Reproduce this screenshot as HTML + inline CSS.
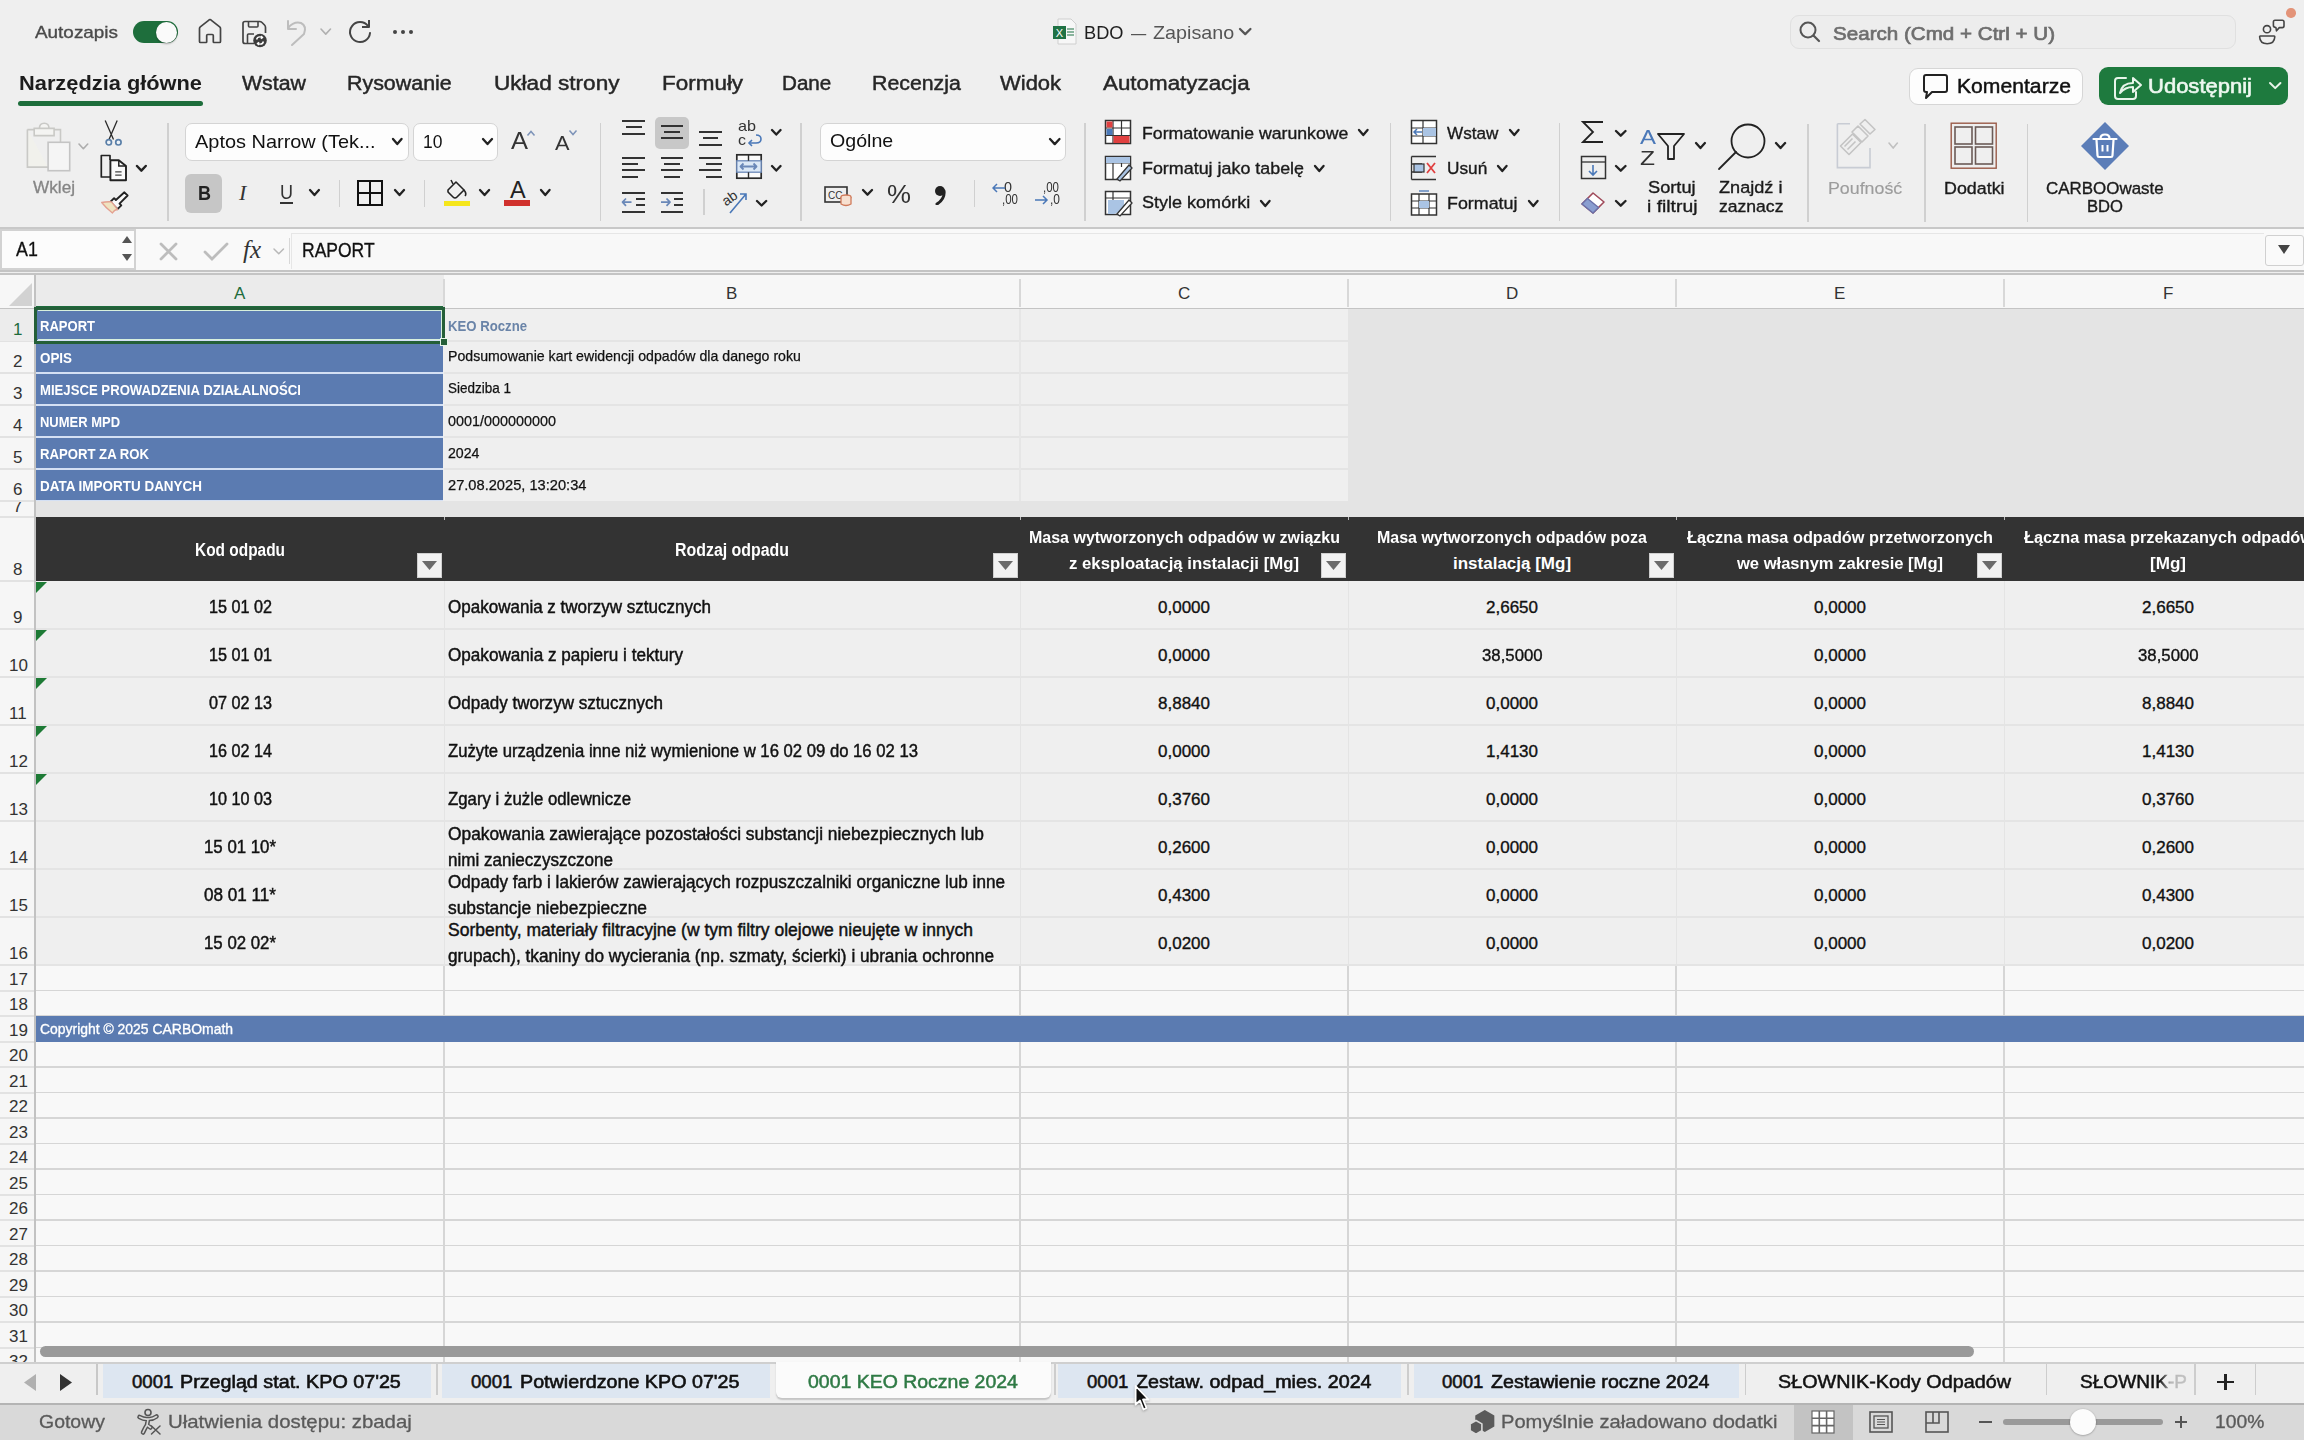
<!DOCTYPE html><html><head><meta charset='utf-8'><style>
*{margin:0;padding:0;box-sizing:border-box}
html,body{width:2304px;height:1440px;overflow:hidden;background:#efefef;font-family:"Liberation Sans",sans-serif;color:#222;position:relative}
.a{position:absolute}
.t{position:absolute;white-space:pre;transform-origin:0 0}
</style></head><body>
<div class="a" style="left:0px;top:274px;width:2304px;height:1088px;background:#f8f8f8;"></div>
<div class="a" style="left:0px;top:309px;width:36px;height:1053px;background:#f6f6f6;"></div>
<div class="a" style="left:36px;top:309px;width:2268px;height:656px;background:#efefef;"></div>
<div class="a" style="left:1348px;top:309px;width:956px;height:208px;background:#e4e4e4;"></div>
<div class="a" style="left:36px;top:501px;width:2268px;height:16px;background:#e4e4e4;"></div>
<div class="a" style="left:36px;top:989.75px;width:2268px;height:1.5px;background:#d6d6d6;"></div>
<div class="a" style="left:36px;top:1015.25px;width:2268px;height:1.5px;background:#d6d6d6;"></div>
<div class="a" style="left:36px;top:1040.75px;width:2268px;height:1.5px;background:#d6d6d6;"></div>
<div class="a" style="left:36px;top:1066.25px;width:2268px;height:1.5px;background:#d6d6d6;"></div>
<div class="a" style="left:36px;top:1091.75px;width:2268px;height:1.5px;background:#d6d6d6;"></div>
<div class="a" style="left:36px;top:1117.25px;width:2268px;height:1.5px;background:#d6d6d6;"></div>
<div class="a" style="left:36px;top:1142.75px;width:2268px;height:1.5px;background:#d6d6d6;"></div>
<div class="a" style="left:36px;top:1168.25px;width:2268px;height:1.5px;background:#d6d6d6;"></div>
<div class="a" style="left:36px;top:1193.75px;width:2268px;height:1.5px;background:#d6d6d6;"></div>
<div class="a" style="left:36px;top:1219.25px;width:2268px;height:1.5px;background:#d6d6d6;"></div>
<div class="a" style="left:36px;top:1244.75px;width:2268px;height:1.5px;background:#d6d6d6;"></div>
<div class="a" style="left:36px;top:1270.25px;width:2268px;height:1.5px;background:#d6d6d6;"></div>
<div class="a" style="left:36px;top:1295.75px;width:2268px;height:1.5px;background:#d6d6d6;"></div>
<div class="a" style="left:36px;top:1321.25px;width:2268px;height:1.5px;background:#d6d6d6;"></div>
<div class="a" style="left:36px;top:1346.75px;width:2268px;height:1.5px;background:#d6d6d6;"></div>
<div class="a" style="left:36px;top:1372.25px;width:2268px;height:1.5px;background:#d6d6d6;"></div>
<div class="a" style="left:36px;top:1397.75px;width:2268px;height:1.5px;background:#d6d6d6;"></div>
<div class="a" style="left:443.25px;top:965px;width:1.5px;height:397px;background:#d6d6d6;"></div>
<div class="a" style="left:1019.25px;top:965px;width:1.5px;height:397px;background:#d6d6d6;"></div>
<div class="a" style="left:1347.25px;top:965px;width:1.5px;height:397px;background:#d6d6d6;"></div>
<div class="a" style="left:1675.25px;top:965px;width:1.5px;height:397px;background:#d6d6d6;"></div>
<div class="a" style="left:2003.25px;top:965px;width:1.5px;height:397px;background:#d6d6d6;"></div>
<div class="a" style="left:36px;top:628.25px;width:2268px;height:1.5px;background:#e4e4e4;"></div>
<div class="a" style="left:36px;top:676.25px;width:2268px;height:1.5px;background:#e4e4e4;"></div>
<div class="a" style="left:36px;top:724.25px;width:2268px;height:1.5px;background:#e4e4e4;"></div>
<div class="a" style="left:36px;top:772.25px;width:2268px;height:1.5px;background:#e4e4e4;"></div>
<div class="a" style="left:36px;top:820.25px;width:2268px;height:1.5px;background:#e4e4e4;"></div>
<div class="a" style="left:36px;top:868.25px;width:2268px;height:1.5px;background:#e4e4e4;"></div>
<div class="a" style="left:36px;top:916.25px;width:2268px;height:1.5px;background:#e4e4e4;"></div>
<div class="a" style="left:36px;top:964.25px;width:2268px;height:1.5px;background:#e4e4e4;"></div>
<div class="a" style="left:443.5px;top:581px;width:1.5px;height:384px;background:#e4e4e4;"></div>
<div class="a" style="left:1019.5px;top:581px;width:1.5px;height:384px;background:#e4e4e4;"></div>
<div class="a" style="left:1347.5px;top:581px;width:1.5px;height:384px;background:#e4e4e4;"></div>
<div class="a" style="left:1675.5px;top:581px;width:1.5px;height:384px;background:#e4e4e4;"></div>
<div class="a" style="left:2003.5px;top:581px;width:1.5px;height:384px;background:#e4e4e4;"></div>
<div class="a" style="left:444px;top:340.25px;width:904px;height:1.5px;background:#e4e4e4;"></div>
<div class="a" style="left:444px;top:372.25px;width:904px;height:1.5px;background:#e4e4e4;"></div>
<div class="a" style="left:444px;top:404.25px;width:904px;height:1.5px;background:#e4e4e4;"></div>
<div class="a" style="left:444px;top:436.25px;width:904px;height:1.5px;background:#e4e4e4;"></div>
<div class="a" style="left:444px;top:468.25px;width:904px;height:1.5px;background:#e4e4e4;"></div>
<div class="a" style="left:1019px;top:309px;width:2px;height:192px;background:#e6e6e6;"></div>
<div class="a" style="left:0px;top:340.0px;width:34px;height:2px;background:#e2e2e2;"></div>
<div class="a" style="left:0px;top:372.0px;width:34px;height:2px;background:#e2e2e2;"></div>
<div class="a" style="left:0px;top:404.0px;width:34px;height:2px;background:#e2e2e2;"></div>
<div class="a" style="left:0px;top:436.0px;width:34px;height:2px;background:#e2e2e2;"></div>
<div class="a" style="left:0px;top:468.0px;width:34px;height:2px;background:#e2e2e2;"></div>
<div class="a" style="left:0px;top:500.0px;width:34px;height:2px;background:#e2e2e2;"></div>
<div class="a" style="left:0px;top:516.0px;width:34px;height:2px;background:#e2e2e2;"></div>
<div class="a" style="left:0px;top:580.0px;width:34px;height:2px;background:#e2e2e2;"></div>
<div class="a" style="left:0px;top:628.0px;width:34px;height:2px;background:#e2e2e2;"></div>
<div class="a" style="left:0px;top:676.0px;width:34px;height:2px;background:#e2e2e2;"></div>
<div class="a" style="left:0px;top:724.0px;width:34px;height:2px;background:#e2e2e2;"></div>
<div class="a" style="left:0px;top:772.0px;width:34px;height:2px;background:#e2e2e2;"></div>
<div class="a" style="left:0px;top:820.0px;width:34px;height:2px;background:#e2e2e2;"></div>
<div class="a" style="left:0px;top:868.0px;width:34px;height:2px;background:#e2e2e2;"></div>
<div class="a" style="left:0px;top:916.0px;width:34px;height:2px;background:#e2e2e2;"></div>
<div class="a" style="left:0px;top:964.0px;width:34px;height:2px;background:#e2e2e2;"></div>
<div class="a" style="left:0px;top:989.5px;width:34px;height:2px;background:#e2e2e2;"></div>
<div class="a" style="left:0px;top:1015.0px;width:34px;height:2px;background:#e2e2e2;"></div>
<div class="a" style="left:0px;top:1040.5px;width:34px;height:2px;background:#e2e2e2;"></div>
<div class="a" style="left:0px;top:1066.0px;width:34px;height:2px;background:#e2e2e2;"></div>
<div class="a" style="left:0px;top:1091.5px;width:34px;height:2px;background:#e2e2e2;"></div>
<div class="a" style="left:0px;top:1117.0px;width:34px;height:2px;background:#e2e2e2;"></div>
<div class="a" style="left:0px;top:1142.5px;width:34px;height:2px;background:#e2e2e2;"></div>
<div class="a" style="left:0px;top:1168.0px;width:34px;height:2px;background:#e2e2e2;"></div>
<div class="a" style="left:0px;top:1193.5px;width:34px;height:2px;background:#e2e2e2;"></div>
<div class="a" style="left:0px;top:1219.0px;width:34px;height:2px;background:#e2e2e2;"></div>
<div class="a" style="left:0px;top:1244.5px;width:34px;height:2px;background:#e2e2e2;"></div>
<div class="a" style="left:0px;top:1270.0px;width:34px;height:2px;background:#e2e2e2;"></div>
<div class="a" style="left:0px;top:1295.5px;width:34px;height:2px;background:#e2e2e2;"></div>
<div class="a" style="left:0px;top:1321.0px;width:34px;height:2px;background:#e2e2e2;"></div>
<div class="a" style="left:0px;top:1346.5px;width:34px;height:2px;background:#e2e2e2;"></div>
<div class="a" style="left:0px;top:1372.0px;width:34px;height:2px;background:#e2e2e2;"></div>
<div class="a" style="left:0px;top:1397.5px;width:34px;height:2px;background:#e2e2e2;"></div>
<div class="a" style="left:36px;top:309px;width:406.5px;height:192px;background:#d4e0f4;"></div>
<div class="a" style="left:36px;top:309.6px;width:406.5px;height:30.8px;background:#5b7bb1;"></div>
<div class="a" style="left:36px;top:341.6px;width:406.5px;height:30.8px;background:#5b7bb1;"></div>
<div class="a" style="left:36px;top:373.6px;width:406.5px;height:30.8px;background:#5b7bb1;"></div>
<div class="a" style="left:36px;top:405.6px;width:406.5px;height:30.8px;background:#5b7bb1;"></div>
<div class="a" style="left:36px;top:437.6px;width:406.5px;height:30.8px;background:#5b7bb1;"></div>
<div class="a" style="left:36px;top:469.6px;width:406.5px;height:30.8px;background:#5b7bb1;"></div>
<div class="a" style="left:36px;top:1016.0px;width:2268px;height:25.5px;background:#5b7bb1;"></div>
<div class="t" style="left:40.00px;top:1021.00px;font-size:15px;line-height:16.75px;color:#ffffff;transform:scaleX(0.9287);-webkit-text-stroke:0.35px #ffffff;">Copyright © 2025 CARBOmath</div>
<div class="a" style="left:36px;top:517px;width:2268px;height:64px;background:#333333;"></div>
<div class="a" style="left:443.5px;top:517px;width:1px;height:3px;background:#bdbdbd;"></div>
<div class="a" style="left:1019.5px;top:517px;width:1px;height:3px;background:#bdbdbd;"></div>
<div class="a" style="left:1347.5px;top:517px;width:1px;height:3px;background:#bdbdbd;"></div>
<div class="a" style="left:1675.5px;top:517px;width:1px;height:3px;background:#bdbdbd;"></div>
<div class="a" style="left:2003.5px;top:517px;width:1px;height:3px;background:#bdbdbd;"></div>
<div class="a" style="left:0px;top:274px;width:2304px;height:35px;background:#f7f7f7;"></div>
<div class="a" style="left:36px;top:274px;width:408px;height:35px;background:#ebebeb;"></div>
<div class="a" style="left:0px;top:307.5px;width:2304px;height:1.5px;background:#c4c4c4;"></div>
<div class="a" style="left:36px;top:306px;width:408px;height:3px;background:#1e6b3c;"></div>
<div class="a" style="left:443px;top:279px;width:2px;height:28px;background:#d8d8d8;"></div>
<div class="a" style="left:1019px;top:279px;width:2px;height:28px;background:#d8d8d8;"></div>
<div class="a" style="left:1347px;top:279px;width:2px;height:28px;background:#d8d8d8;"></div>
<div class="a" style="left:1675px;top:279px;width:2px;height:28px;background:#d8d8d8;"></div>
<div class="a" style="left:2003px;top:279px;width:2px;height:28px;background:#d8d8d8;"></div>
<div class="a" style="left:34px;top:274px;width:2px;height:1088px;background:#c2c2c2;"></div>
<svg class="a" style="left:8px;top:283px;" width="25" height="24" viewBox="0 0 25 24"><path d="M24 0 L24 23 L1 23 Z" fill="#d2d2d2"/></svg>
<div class="t" style="left:234.00px;top:284.00px;font-size:17px;line-height:18.99px;color:#1e6b3c;">A</div>
<div class="t" style="left:726.00px;top:284.00px;font-size:17px;line-height:18.99px;color:#333;">B</div>
<div class="t" style="left:1178.00px;top:284.00px;font-size:17px;line-height:18.99px;color:#333;">C</div>
<div class="t" style="left:1506.00px;top:284.00px;font-size:17px;line-height:18.99px;color:#333;">D</div>
<div class="t" style="left:1834.00px;top:284.00px;font-size:17px;line-height:18.99px;color:#333;">E</div>
<div class="t" style="left:2163.00px;top:284.00px;font-size:17px;line-height:18.99px;color:#333;">F</div>
<div class="a" style="left:0px;top:309px;width:34px;height:32px;background:#ececec;"></div>
<div class="a" style="left:0px;top:341px;width:34px;height:1px;background:#e2e2e2;"></div>
<div class="t" style="left:13.00px;top:320.00px;font-size:17px;line-height:18.99px;color:#1e6b3c;">1</div>
<div class="t" style="left:13.00px;top:352.00px;font-size:17px;line-height:18.99px;color:#333;">2</div>
<div class="t" style="left:13.00px;top:384.00px;font-size:17px;line-height:18.99px;color:#333;">3</div>
<div class="t" style="left:13.00px;top:416.00px;font-size:17px;line-height:18.99px;color:#333;">4</div>
<div class="t" style="left:13.00px;top:448.00px;font-size:17px;line-height:18.99px;color:#333;">5</div>
<div class="t" style="left:13.00px;top:480.00px;font-size:17px;line-height:18.99px;color:#333;">6</div>
<div class="a" style="left:0;top:502px;width:34px;height:14px;overflow:hidden">
<div class="t" style="left:13.00px;top:-5.00px;font-size:17px;line-height:18.99px;color:#333;">7</div>
</div>
<div class="t" style="left:13.00px;top:560.00px;font-size:17px;line-height:18.99px;color:#333;">8</div>
<div class="t" style="left:13.00px;top:608.00px;font-size:17px;line-height:18.99px;color:#333;">9</div>
<div class="t" style="left:9.00px;top:656.00px;font-size:17px;line-height:18.99px;color:#333;">10</div>
<div class="t" style="left:9.00px;top:704.00px;font-size:17px;line-height:18.99px;color:#333;">11</div>
<div class="t" style="left:9.00px;top:752.00px;font-size:17px;line-height:18.99px;color:#333;">12</div>
<div class="t" style="left:9.00px;top:800.00px;font-size:17px;line-height:18.99px;color:#333;">13</div>
<div class="t" style="left:9.00px;top:848.00px;font-size:17px;line-height:18.99px;color:#333;">14</div>
<div class="t" style="left:9.00px;top:896.00px;font-size:17px;line-height:18.99px;color:#333;">15</div>
<div class="t" style="left:9.00px;top:944.00px;font-size:17px;line-height:18.99px;color:#333;">16</div>
<div class="t" style="left:9.00px;top:970.00px;font-size:17px;line-height:18.99px;color:#333;">17</div>
<div class="t" style="left:9.00px;top:995.00px;font-size:17px;line-height:18.99px;color:#333;">18</div>
<div class="t" style="left:9.00px;top:1021.00px;font-size:17px;line-height:18.99px;color:#333;">19</div>
<div class="t" style="left:9.00px;top:1046.00px;font-size:17px;line-height:18.99px;color:#333;">20</div>
<div class="t" style="left:9.00px;top:1072.00px;font-size:17px;line-height:18.99px;color:#333;">21</div>
<div class="t" style="left:9.00px;top:1097.00px;font-size:17px;line-height:18.99px;color:#333;">22</div>
<div class="t" style="left:9.00px;top:1123.00px;font-size:17px;line-height:18.99px;color:#333;">23</div>
<div class="t" style="left:9.00px;top:1148.00px;font-size:17px;line-height:18.99px;color:#333;">24</div>
<div class="t" style="left:9.00px;top:1174.00px;font-size:17px;line-height:18.99px;color:#333;">25</div>
<div class="t" style="left:9.00px;top:1199.00px;font-size:17px;line-height:18.99px;color:#333;">26</div>
<div class="t" style="left:9.00px;top:1225.00px;font-size:17px;line-height:18.99px;color:#333;">27</div>
<div class="t" style="left:9.00px;top:1250.00px;font-size:17px;line-height:18.99px;color:#333;">28</div>
<div class="t" style="left:9.00px;top:1276.00px;font-size:17px;line-height:18.99px;color:#333;">29</div>
<div class="t" style="left:9.00px;top:1301.00px;font-size:17px;line-height:18.99px;color:#333;">30</div>
<div class="t" style="left:9.00px;top:1327.00px;font-size:17px;line-height:18.99px;color:#333;">31</div>
<div class="t" style="left:9.00px;top:1352.00px;font-size:17px;line-height:18.99px;color:#333;">32</div>
<div class="t" style="left:40.00px;top:318.00px;font-size:14.5px;line-height:16.20px;color:#ffffff;font-weight:bold;transform:scaleX(0.8984);">RAPORT</div>
<div class="t" style="left:40.00px;top:350.00px;font-size:14.5px;line-height:16.20px;color:#ffffff;font-weight:bold;transform:scaleX(0.9235);">OPIS</div>
<div class="t" style="left:40.00px;top:382.00px;font-size:14.5px;line-height:16.20px;color:#ffffff;font-weight:bold;transform:scaleX(0.9067);">MIEJSCE PROWADZENIA DZIAŁALNOŚCI</div>
<div class="t" style="left:40.00px;top:414.00px;font-size:14.5px;line-height:16.20px;color:#ffffff;font-weight:bold;transform:scaleX(0.8947);">NUMER MPD</div>
<div class="t" style="left:40.00px;top:446.00px;font-size:14.5px;line-height:16.20px;color:#ffffff;font-weight:bold;transform:scaleX(0.9061);">RAPORT ZA ROK</div>
<div class="t" style="left:40.00px;top:478.00px;font-size:14.5px;line-height:16.20px;color:#ffffff;font-weight:bold;transform:scaleX(0.9282);">DATA IMPORTU DANYCH</div>
<div class="t" style="left:448.00px;top:318.00px;font-size:14.5px;line-height:16.20px;color:#6a84a8;font-weight:bold;transform:scaleX(0.9079);">KEO Roczne</div>
<div class="t" style="left:448.00px;top:348.00px;font-size:14.8px;line-height:16.53px;color:#111;transform:scaleX(0.9555);-webkit-text-stroke:0.25px #111;">Podsumowanie kart ewidencji odpadów dla danego roku</div>
<div class="t" style="left:448.00px;top:380.00px;font-size:14.8px;line-height:16.53px;color:#111;transform:scaleX(0.9115);-webkit-text-stroke:0.25px #111;">Siedziba 1</div>
<div class="t" style="left:448.00px;top:413.00px;font-size:14.8px;line-height:16.53px;color:#111;transform:scaleX(0.9719);-webkit-text-stroke:0.25px #111;">0001/000000000</div>
<div class="t" style="left:448.00px;top:445.00px;font-size:14.8px;line-height:16.53px;color:#111;transform:scaleX(0.9567);-webkit-text-stroke:0.25px #111;">2024</div>
<div class="t" style="left:448.00px;top:477.00px;font-size:14.8px;line-height:16.53px;color:#111;transform:scaleX(0.9899);-webkit-text-stroke:0.25px #111;">27.08.2025, 13:20:34</div>
<div class="t" style="left:195.00px;top:540.00px;font-size:18px;line-height:20.11px;color:#fff;font-weight:bold;transform:scaleX(0.8573);">Kod odpadu</div>
<div class="t" style="left:675.00px;top:540.00px;font-size:18px;line-height:20.11px;color:#fff;font-weight:bold;transform:scaleX(0.8838);">Rodzaj odpadu</div>
<div class="t" style="left:1028.50px;top:528.00px;font-size:17px;line-height:18.99px;color:#fff;font-weight:bold;transform:scaleX(0.9407);">Masa wytworzonych odpadów w związku</div>
<div class="t" style="left:1069.00px;top:554.00px;font-size:17px;line-height:18.99px;color:#fff;font-weight:bold;transform:scaleX(0.9856);">z eksploatacją instalacji [Mg]</div>
<div class="t" style="left:1377.00px;top:528.00px;font-size:17px;line-height:18.99px;color:#fff;font-weight:bold;transform:scaleX(0.9403);">Masa wytworzonych odpadów poza</div>
<div class="t" style="left:1453.00px;top:554.00px;font-size:17px;line-height:18.99px;color:#fff;font-weight:bold;">instalacją [Mg]</div>
<div class="t" style="left:1687.00px;top:528.00px;font-size:17px;line-height:18.99px;color:#fff;font-weight:bold;transform:scaleX(0.9584);">Łączna masa odpadów przetworzonych</div>
<div class="t" style="left:1737.00px;top:554.00px;font-size:17px;line-height:18.99px;color:#fff;font-weight:bold;transform:scaleX(0.9734);">we własnym zakresie [Mg]</div>
<div class="t" style="left:2023.50px;top:528.00px;font-size:17px;line-height:18.99px;color:#fff;font-weight:bold;transform:scaleX(0.9589);">Łączna masa przekazanych odpadów</div>
<div class="t" style="left:2150.00px;top:554.00px;font-size:17px;line-height:18.99px;color:#fff;font-weight:bold;transform:scaleX(1.0036);">[Mg]</div>
<div class="a" style="left:417px;top:553px;width:25px;height:25px;background:#f2f2f2;border:1px solid #cfcfcf"></div>
<svg class="a" style="left:422px;top:561px;" width="15" height="9" viewBox="0 0 15 9"><path d="M0 0 L15 0 L7.5 9 Z" fill="#6b6b6b"/></svg>
<div class="a" style="left:993px;top:553px;width:25px;height:25px;background:#f2f2f2;border:1px solid #cfcfcf"></div>
<svg class="a" style="left:998px;top:561px;" width="15" height="9" viewBox="0 0 15 9"><path d="M0 0 L15 0 L7.5 9 Z" fill="#6b6b6b"/></svg>
<div class="a" style="left:1321px;top:553px;width:25px;height:25px;background:#f2f2f2;border:1px solid #cfcfcf"></div>
<svg class="a" style="left:1326px;top:561px;" width="15" height="9" viewBox="0 0 15 9"><path d="M0 0 L15 0 L7.5 9 Z" fill="#6b6b6b"/></svg>
<div class="a" style="left:1649px;top:553px;width:25px;height:25px;background:#f2f2f2;border:1px solid #cfcfcf"></div>
<svg class="a" style="left:1654px;top:561px;" width="15" height="9" viewBox="0 0 15 9"><path d="M0 0 L15 0 L7.5 9 Z" fill="#6b6b6b"/></svg>
<div class="a" style="left:1977px;top:553px;width:25px;height:25px;background:#f2f2f2;border:1px solid #cfcfcf"></div>
<svg class="a" style="left:1982px;top:561px;" width="15" height="9" viewBox="0 0 15 9"><path d="M0 0 L15 0 L7.5 9 Z" fill="#6b6b6b"/></svg>
<div class="t" style="left:208.50px;top:598.00px;font-size:17.5px;line-height:19.55px;color:#111;transform:scaleX(0.9248);-webkit-text-stroke:0.45px #111;">15 01 02</div>
<div class="t" style="left:448.00px;top:598.00px;font-size:17.5px;line-height:19.55px;color:#111;transform:scaleX(0.9727);-webkit-text-stroke:0.45px #111;">Opakowania z tworzyw sztucznych</div>
<div class="t" style="left:1158.00px;top:598.00px;font-size:17px;line-height:18.99px;color:#111;-webkit-text-stroke:0.35px #111;">0,0000</div>
<div class="t" style="left:1486.00px;top:598.00px;font-size:17px;line-height:18.99px;color:#111;-webkit-text-stroke:0.35px #111;">2,6650</div>
<div class="t" style="left:1814.00px;top:598.00px;font-size:17px;line-height:18.99px;color:#111;-webkit-text-stroke:0.35px #111;">0,0000</div>
<div class="t" style="left:2142.00px;top:598.00px;font-size:17px;line-height:18.99px;color:#111;-webkit-text-stroke:0.35px #111;">2,6650</div>
<svg class="a" style="left:36px;top:582px;" width="11" height="11" viewBox="0 0 11 11"><path d="M0 0 L11 0 L0 11 Z" fill="#1d7a35"/></svg>
<div class="t" style="left:208.50px;top:646.00px;font-size:17.5px;line-height:19.55px;color:#111;transform:scaleX(0.9248);-webkit-text-stroke:0.45px #111;">15 01 01</div>
<div class="t" style="left:448.00px;top:646.00px;font-size:17.5px;line-height:19.55px;color:#111;transform:scaleX(0.9781);-webkit-text-stroke:0.45px #111;">Opakowania z papieru i tektury</div>
<div class="t" style="left:1158.00px;top:646.00px;font-size:17px;line-height:18.99px;color:#111;-webkit-text-stroke:0.35px #111;">0,0000</div>
<div class="t" style="left:1481.50px;top:646.00px;font-size:17px;line-height:18.99px;color:#111;transform:scaleX(0.9872);-webkit-text-stroke:0.35px #111;">38,5000</div>
<div class="t" style="left:1814.00px;top:646.00px;font-size:17px;line-height:18.99px;color:#111;-webkit-text-stroke:0.35px #111;">0,0000</div>
<div class="t" style="left:2137.50px;top:646.00px;font-size:17px;line-height:18.99px;color:#111;transform:scaleX(0.9872);-webkit-text-stroke:0.35px #111;">38,5000</div>
<svg class="a" style="left:36px;top:630px;" width="11" height="11" viewBox="0 0 11 11"><path d="M0 0 L11 0 L0 11 Z" fill="#1d7a35"/></svg>
<div class="t" style="left:208.50px;top:694.00px;font-size:17.5px;line-height:19.55px;color:#111;transform:scaleX(0.9248);-webkit-text-stroke:0.45px #111;">07 02 13</div>
<div class="t" style="left:448.00px;top:694.00px;font-size:17.5px;line-height:19.55px;color:#111;transform:scaleX(0.9738);-webkit-text-stroke:0.45px #111;">Odpady tworzyw sztucznych</div>
<div class="t" style="left:1158.00px;top:694.00px;font-size:17px;line-height:18.99px;color:#111;-webkit-text-stroke:0.35px #111;">8,8840</div>
<div class="t" style="left:1486.00px;top:694.00px;font-size:17px;line-height:18.99px;color:#111;-webkit-text-stroke:0.35px #111;">0,0000</div>
<div class="t" style="left:1814.00px;top:694.00px;font-size:17px;line-height:18.99px;color:#111;-webkit-text-stroke:0.35px #111;">0,0000</div>
<div class="t" style="left:2142.00px;top:694.00px;font-size:17px;line-height:18.99px;color:#111;-webkit-text-stroke:0.35px #111;">8,8840</div>
<svg class="a" style="left:36px;top:678px;" width="11" height="11" viewBox="0 0 11 11"><path d="M0 0 L11 0 L0 11 Z" fill="#1d7a35"/></svg>
<div class="t" style="left:208.50px;top:742.00px;font-size:17.5px;line-height:19.55px;color:#111;transform:scaleX(0.9248);-webkit-text-stroke:0.45px #111;">16 02 14</div>
<div class="t" style="left:448.00px;top:742.00px;font-size:17.5px;line-height:19.55px;color:#111;transform:scaleX(0.9529);-webkit-text-stroke:0.45px #111;">Zużyte urządzenia inne niż wymienione w 16 02 09 do 16 02 13</div>
<div class="t" style="left:1158.00px;top:742.00px;font-size:17px;line-height:18.99px;color:#111;-webkit-text-stroke:0.35px #111;">0,0000</div>
<div class="t" style="left:1486.00px;top:742.00px;font-size:17px;line-height:18.99px;color:#111;-webkit-text-stroke:0.35px #111;">1,4130</div>
<div class="t" style="left:1814.00px;top:742.00px;font-size:17px;line-height:18.99px;color:#111;-webkit-text-stroke:0.35px #111;">0,0000</div>
<div class="t" style="left:2142.00px;top:742.00px;font-size:17px;line-height:18.99px;color:#111;-webkit-text-stroke:0.35px #111;">1,4130</div>
<svg class="a" style="left:36px;top:726px;" width="11" height="11" viewBox="0 0 11 11"><path d="M0 0 L11 0 L0 11 Z" fill="#1d7a35"/></svg>
<div class="t" style="left:208.50px;top:790.00px;font-size:17.5px;line-height:19.55px;color:#111;transform:scaleX(0.9248);-webkit-text-stroke:0.45px #111;">10 10 03</div>
<div class="t" style="left:448.00px;top:790.00px;font-size:17.5px;line-height:19.55px;color:#111;transform:scaleX(0.9599);-webkit-text-stroke:0.45px #111;">Zgary i żużle odlewnicze</div>
<div class="t" style="left:1158.00px;top:790.00px;font-size:17px;line-height:18.99px;color:#111;-webkit-text-stroke:0.35px #111;">0,3760</div>
<div class="t" style="left:1486.00px;top:790.00px;font-size:17px;line-height:18.99px;color:#111;-webkit-text-stroke:0.35px #111;">0,0000</div>
<div class="t" style="left:1814.00px;top:790.00px;font-size:17px;line-height:18.99px;color:#111;-webkit-text-stroke:0.35px #111;">0,0000</div>
<div class="t" style="left:2142.00px;top:790.00px;font-size:17px;line-height:18.99px;color:#111;-webkit-text-stroke:0.35px #111;">0,3760</div>
<svg class="a" style="left:36px;top:774px;" width="11" height="11" viewBox="0 0 11 11"><path d="M0 0 L11 0 L0 11 Z" fill="#1d7a35"/></svg>
<div class="t" style="left:204.00px;top:838.00px;font-size:17.5px;line-height:19.55px;color:#111;transform:scaleX(0.9609);-webkit-text-stroke:0.45px #111;">15 01 10*</div>
<div class="t" style="left:448.00px;top:825.00px;font-size:17.5px;line-height:19.55px;color:#111;transform:scaleX(0.9910);-webkit-text-stroke:0.45px #111;">Opakowania zawierające pozostałości substancji niebezpiecznych lub</div>
<div class="t" style="left:448.00px;top:851.00px;font-size:17.5px;line-height:19.55px;color:#111;transform:scaleX(0.9750);-webkit-text-stroke:0.45px #111;">nimi zanieczyszczone</div>
<div class="t" style="left:1158.00px;top:838.00px;font-size:17px;line-height:18.99px;color:#111;-webkit-text-stroke:0.35px #111;">0,2600</div>
<div class="t" style="left:1486.00px;top:838.00px;font-size:17px;line-height:18.99px;color:#111;-webkit-text-stroke:0.35px #111;">0,0000</div>
<div class="t" style="left:1814.00px;top:838.00px;font-size:17px;line-height:18.99px;color:#111;-webkit-text-stroke:0.35px #111;">0,0000</div>
<div class="t" style="left:2142.00px;top:838.00px;font-size:17px;line-height:18.99px;color:#111;-webkit-text-stroke:0.35px #111;">0,2600</div>
<div class="t" style="left:204.00px;top:886.00px;font-size:17.5px;line-height:19.55px;color:#111;transform:scaleX(0.9778);-webkit-text-stroke:0.45px #111;">08 01 11*</div>
<div class="t" style="left:448.00px;top:873.00px;font-size:17.5px;line-height:19.55px;color:#111;transform:scaleX(0.9788);-webkit-text-stroke:0.45px #111;">Odpady farb i lakierów zawierających rozpuszczalniki organiczne lub inne</div>
<div class="t" style="left:448.00px;top:899.00px;font-size:17.5px;line-height:19.55px;color:#111;transform:scaleX(0.9929);-webkit-text-stroke:0.45px #111;">substancje niebezpieczne</div>
<div class="t" style="left:1158.00px;top:886.00px;font-size:17px;line-height:18.99px;color:#111;-webkit-text-stroke:0.35px #111;">0,4300</div>
<div class="t" style="left:1486.00px;top:886.00px;font-size:17px;line-height:18.99px;color:#111;-webkit-text-stroke:0.35px #111;">0,0000</div>
<div class="t" style="left:1814.00px;top:886.00px;font-size:17px;line-height:18.99px;color:#111;-webkit-text-stroke:0.35px #111;">0,0000</div>
<div class="t" style="left:2142.00px;top:886.00px;font-size:17px;line-height:18.99px;color:#111;-webkit-text-stroke:0.35px #111;">0,4300</div>
<div class="t" style="left:204.00px;top:934.00px;font-size:17.5px;line-height:19.55px;color:#111;transform:scaleX(0.9609);-webkit-text-stroke:0.45px #111;">15 02 02*</div>
<div class="t" style="left:448.00px;top:921.00px;font-size:17.5px;line-height:19.55px;color:#111;-webkit-text-stroke:0.45px #111;">Sorbenty, materiały filtracyjne (w tym filtry olejowe nieujęte w innych</div>
<div class="t" style="left:448.00px;top:947.00px;font-size:17.5px;line-height:19.55px;color:#111;transform:scaleX(0.9836);-webkit-text-stroke:0.45px #111;">grupach), tkaniny do wycierania (np. szmaty, ścierki) i ubrania ochronne</div>
<div class="t" style="left:1158.00px;top:934.00px;font-size:17px;line-height:18.99px;color:#111;-webkit-text-stroke:0.35px #111;">0,0200</div>
<div class="t" style="left:1486.00px;top:934.00px;font-size:17px;line-height:18.99px;color:#111;-webkit-text-stroke:0.35px #111;">0,0000</div>
<div class="t" style="left:1814.00px;top:934.00px;font-size:17px;line-height:18.99px;color:#111;-webkit-text-stroke:0.35px #111;">0,0000</div>
<div class="t" style="left:2142.00px;top:934.00px;font-size:17px;line-height:18.99px;color:#111;-webkit-text-stroke:0.35px #111;">0,0200</div>
<div class="a" style="left:34px;top:307px;width:411px;height:3px;background:#245f38;"></div>
<div class="a" style="left:34px;top:307px;width:3px;height:36.5px;background:#245f38;"></div>
<div class="a" style="left:442px;top:307px;width:3px;height:31px;background:#245f38;"></div>
<div class="a" style="left:34px;top:340.5px;width:406px;height:3px;background:#245f38;"></div>
<div class="a" style="left:38px;top:310px;width:404px;height:1px;background:#d8f0dd;"></div>
<div class="a" style="left:38px;top:339px;width:404px;height:1px;background:#d8f0dd;"></div>
<div class="a" style="left:441px;top:310px;width:1px;height:30px;background:#d8f0dd;"></div>
<div class="a" style="left:439.5px;top:337.5px;width:8.5px;height:8.5px;background:#245f38;border:1px solid #e8f5ea"></div>
<div class="a" style="left:40px;top:1346px;width:1934px;height:11px;background:#9a9a9a;border-radius:6px"></div>
<div class="a" style="left:0px;top:0px;width:2304px;height:228px;background:#efefef;"></div>
<div class="t" style="left:34.50px;top:23.00px;font-size:17px;line-height:18.99px;color:#4a4a4a;transform:scaleX(1.1117);-webkit-text-stroke:0.35px #4a4a4a;">Autozapis</div>
<div class="a" style="left:133px;top:21px;width:45px;height:22px;background:#1e6e3c;border-radius:11px"></div>
<div class="a" style="left:156px;top:22px;width:21px;height:21px;border-radius:50%;background:#fafafa;box-shadow:0 1px 2px rgba(0,0,0,.35)"></div>
<svg class="a" style="left:196px;top:17px;" width="28" height="28" viewBox="0 0 28 28"><path d="M3.5 24.5 L3.5 11.5 Q3.5 10.5 4.3 9.8 L13.2 2.8 Q14 2.2 14.8 2.8 L23.7 9.8 Q24.5 10.5 24.5 11.5 L24.5 24.5 Q24.5 25.5 23.5 25.5 L18 25.5 Q17.3 25.5 17.3 24.8 L17.3 18.5 Q17.3 17.5 16.3 17.5 L11.7 17.5 Q10.7 17.5 10.7 18.5 L10.7 24.8 Q10.7 25.5 10 25.5 L4.5 25.5 Q3.5 25.5 3.5 24.5 Z" fill="none" stroke="#444" stroke-width="1.7" stroke-linejoin="round"/></svg>
<svg class="a" style="left:240px;top:19px;" width="32" height="30" viewBox="0 0 32 30"><path d="M14 24.5 L5 24.5 Q3 24.5 3 22.5 L3 4.5 Q3 2.5 5 2.5 L19.5 2.5 Q21 2.5 22 3.5 L24.5 6 Q25.5 7 25.5 8.5 L25.5 14" fill="none" stroke="#444" stroke-width="1.7" stroke-linejoin="round"/><path d="M8.5 2.5 L8.5 7 Q8.5 8 9.5 8 L17 8 Q18 8 18 7 L18 2.5" fill="none" stroke="#444" stroke-width="1.6"/><path d="M7.5 24.5 L7.5 16 Q7.5 15 8.5 15 L14 15" fill="none" stroke="#444" stroke-width="1.6"/><circle cx="20" cy="21.5" r="6.8" fill="#3c3c3c"/><path d="M16.6 20.5 Q17.2 17.6 20.3 17.9 L22.3 18.6 M23.4 22.5 Q22.8 25.4 19.7 25.1 L17.7 24.4" fill="none" stroke="#fff" stroke-width="1.4"/><path d="M21.2 17 L22.6 18.7 L20.8 19.7 M18.8 26 L17.4 24.3 L19.2 23.3" fill="none" stroke="#fff" stroke-width="1.2"/></svg>
<svg class="a" style="left:284px;top:17px;" width="26" height="30" viewBox="0 0 26 30"><path d="M4 4 L4 12 L12 12 M4 11 Q10 4 17 6 Q23 9 20 17 L8 28" fill="none" stroke="#bdbdbd" stroke-width="2" stroke-linecap="round" stroke-linejoin="round"/></svg>
<svg class="a" style="left:319.25px;top:27px;" width="13.5" height="9.1" viewBox="0 0 13.5 9.1"><path d="M2 2 L6.75 7.10 L11.50 2" fill="none" stroke="#b0b0b0" stroke-width="1.6" stroke-linecap="round" stroke-linejoin="round"/></svg>
<svg class="a" style="left:346px;top:18px;" width="28" height="28" viewBox="0 0 28 28"><path d="M22 8 A10 10 0 1 0 24 15" fill="none" stroke="#444" stroke-width="2" stroke-linecap="round"/><path d="M23 2 L23 9 L16 9" fill="none" stroke="#444" stroke-width="2" stroke-linejoin="round"/></svg>
<div class="a" style="left:392.7px;top:29.7px;width:4.6px;height:4.6px;border-radius:50%;background:#444"></div>
<div class="a" style="left:400.7px;top:29.7px;width:4.6px;height:4.6px;border-radius:50%;background:#444"></div>
<div class="a" style="left:408.7px;top:29.7px;width:4.6px;height:4.6px;border-radius:50%;background:#444"></div>
<svg class="a" style="left:1052px;top:18px;" width="26" height="28" viewBox="0 0 26 28"><path d="M6 1 L19 1 L24 6 L24 26 L6 26 Z" fill="#f7f7f7" stroke="#cfcfcf" stroke-width="1"/><rect x="1" y="8" width="13" height="13" fill="#1f7244"/><text x="7.5" y="18.5" font-size="11" font-family="Liberation Sans" fill="#fff" text-anchor="middle">X</text><path d="M15 11 H22 M15 14 H22 M15 17 H22" stroke="#1f7244" stroke-width="1.2"/></svg>
<div class="t" style="left:1084.00px;top:22.00px;font-size:19px;line-height:21.22px;color:#1e1e1e;transform:scaleX(0.9594);">BDO</div>
<div class="t" style="left:1130.50px;top:22.00px;font-size:19px;line-height:21.22px;color:#555555;transform:scaleX(0.8000);">—</div>
<div class="t" style="left:1152.50px;top:22.00px;font-size:19px;line-height:21.22px;color:#555555;transform:scaleX(1.0388);">Zapisano</div>
<svg class="a" style="left:1238.275px;top:27px;" width="14.45" height="9.1" viewBox="0 0 14.45 9.1"><path d="M2 2 L7.22 7.10 L12.45 2" fill="none" stroke="#555" stroke-width="2.3" stroke-linecap="round" stroke-linejoin="round"/></svg>
<div class="a" style="left:1789.5px;top:15px;width:446.5px;height:34px;background:#ededed;border:1.5px solid #e0e0e0;border-radius:9px"></div>
<svg class="a" style="left:1798px;top:20px;" width="26" height="26" viewBox="0 0 26 26"><circle cx="10" cy="10" r="7.5" fill="none" stroke="#555" stroke-width="2"/><path d="M15.5 15.5 L21 21" stroke="#555" stroke-width="2.2" stroke-linecap="round"/></svg>
<div class="t" style="left:1833.00px;top:23.00px;font-size:19px;line-height:21.22px;color:#6e6e6e;transform:scaleX(1.0838);-webkit-text-stroke:0.7px #6e6e6e;">Search (Cmd + Ctrl + U)</div>
<svg class="a" style="left:2255px;top:16px;" width="34" height="32" viewBox="0 0 34 32"><circle cx="12" cy="13.2" r="3.6" fill="none" stroke="#444" stroke-width="1.6"/><path d="M5.2 20 L19.2 20 Q19.8 20 19.8 20.8 Q19.5 27.8 12.2 27.8 Q4.9 27.8 4.6 20.8 Q4.6 20 5.2 20 Z" fill="none" stroke="#444" stroke-width="1.6" stroke-linejoin="round"/><path d="M20 4.2 L27.3 4.2 Q29 4.2 29 6 L29 9.8 Q29 11.6 27.3 11.6 L24.3 11.6 L21.5 14.8 L20.9 11.6 Q18.4 11.4 18.4 9.6 L18.4 6 Q18.4 4.2 20 4.2 Z" fill="none" stroke="#444" stroke-width="1.6" stroke-linejoin="round"/></svg>
<div class="a" style="left:2286.3px;top:8.1px;width:9.5px;height:9.5px;border-radius:50%;background:#e39378"></div>
<div class="t" style="left:19.00px;top:72.00px;font-size:20px;line-height:22.34px;color:#1c1c1c;font-weight:bold;transform:scaleX(1.0905);">Narzędzia główne</div>
<div class="t" style="left:241.50px;top:72.00px;font-size:20px;line-height:22.34px;color:#262626;transform:scaleX(1.0650);-webkit-text-stroke:0.45px #262626;">Wstaw</div>
<div class="t" style="left:346.50px;top:72.00px;font-size:20px;line-height:22.34px;color:#262626;transform:scaleX(1.0703);-webkit-text-stroke:0.45px #262626;">Rysowanie</div>
<div class="t" style="left:494.00px;top:72.00px;font-size:20px;line-height:22.34px;color:#262626;transform:scaleX(1.1291);-webkit-text-stroke:0.45px #262626;">Układ strony</div>
<div class="t" style="left:661.50px;top:72.00px;font-size:20px;line-height:22.34px;color:#262626;transform:scaleX(1.1228);-webkit-text-stroke:0.45px #262626;">Formuły</div>
<div class="t" style="left:781.50px;top:72.00px;font-size:20px;line-height:22.34px;color:#262626;transform:scaleX(1.0311);-webkit-text-stroke:0.45px #262626;">Dane</div>
<div class="t" style="left:872.00px;top:72.00px;font-size:20px;line-height:22.34px;color:#262626;transform:scaleX(1.0650);-webkit-text-stroke:0.45px #262626;">Recenzja</div>
<div class="t" style="left:999.50px;top:72.00px;font-size:20px;line-height:22.34px;color:#262626;transform:scaleX(1.0996);-webkit-text-stroke:0.45px #262626;">Widok</div>
<div class="t" style="left:1103.00px;top:72.00px;font-size:20px;line-height:22.34px;color:#262626;transform:scaleX(1.1184);-webkit-text-stroke:0.45px #262626;">Automatyzacja</div>
<div class="a" style="left:18px;top:101px;width:185px;height:4.5px;background:#1e6e3c;border-radius:3px"></div>
<div class="a" style="left:1908.5px;top:68px;width:174px;height:37px;background:#fdfdfd;border:1.5px solid #d6d6d6;border-radius:9px"></div>
<svg class="a" style="left:1920px;top:73px;" width="30" height="30" viewBox="0 0 30 30"><path d="M4 4 Q4 2 6 2 L25 2 Q27 2 27 4 L27 17 Q27 19 25 19 L12 19 L6 25 L7 19 L6 19 Q4 19 4 17 Z" fill="none" stroke="#222" stroke-width="2" stroke-linejoin="round"/></svg>
<div class="t" style="left:1956.50px;top:75.00px;font-size:20.5px;line-height:22.90px;color:#111;transform:scaleX(1.0314);-webkit-text-stroke:0.45px #111;">Komentarze</div>
<div class="a" style="left:2099px;top:67px;width:189px;height:38px;background:#1e7a3e;border-radius:9px"></div>
<svg class="a" style="left:2112px;top:72px;" width="32" height="30" viewBox="0 0 32 30"><path d="M14 6 L6 6 Q3 6 3 9 L3 24 Q3 27 6 27 L21 27 Q24 27 24 24 L24 20" fill="none" stroke="#e8f5ea" stroke-width="2" stroke-linecap="round"/><path d="M8 21 Q10 11 21 11 L21 6 L29 13 L21 20 L21 15 Q13 15 8 21 Z" fill="none" stroke="#e8f5ea" stroke-width="2" stroke-linejoin="round"/></svg>
<div class="t" style="left:2148.00px;top:75.00px;font-size:20.5px;line-height:22.90px;color:#eef8f0;transform:scaleX(1.0736);-webkit-text-stroke:0.6px #eef8f0;">Udostępnij</div>
<svg class="a" style="left:2268.275px;top:81px;" width="14.45" height="9.1" viewBox="0 0 14.45 9.1"><path d="M2 2 L7.22 7.10 L12.45 2" fill="none" stroke="#e8f5ea" stroke-width="2" stroke-linecap="round" stroke-linejoin="round"/></svg>
<svg class="a" style="left:20px;top:118px;" width="56" height="58" viewBox="0 0 56 58"><path d="M7.4 11.6 L7.4 49.1 L28 49.1" fill="#f1f1ec" stroke="#c9c9c6" stroke-width="1.6"/><path d="M7.4 11.6 L14.2 11.6 M34.1 11.6 L40.5 11.6 L40.5 24" fill="none" stroke="#c9c9c6" stroke-width="1.6"/><path d="M14.2 10.4 L34.1 10.4 L34.1 17.6 L14.2 17.6 Z M19.4 10.4 Q19.4 5.2 24.2 5.2 Q29 5.2 29 10.4" fill="#f4f4f2" stroke="#c9c9c6" stroke-width="1.6"/><rect x="28.1" y="24.3" width="21.6" height="28.4" fill="#f5f5f5" stroke="#c4c4c4" stroke-width="1.6"/></svg>
<svg class="a" style="left:76.72999999999999px;top:141.5px;" width="12.739999999999998" height="8.76" viewBox="0 0 12.739999999999998 8.76"><path d="M2 2 L6.37 6.76 L10.74 2" fill="none" stroke="#adadad" stroke-width="1.6" stroke-linecap="round" stroke-linejoin="round"/></svg>
<div class="t" style="left:33.00px;top:178.00px;font-size:17px;line-height:18.99px;color:#858585;transform:scaleX(1.0107);-webkit-text-stroke:0.3px #858585;">Wklej</div>
<svg class="a" style="left:100px;top:116px;" width="26" height="32" viewBox="0 0 26 32"><path d="M5.2 4.4 L13.5 23.5 M17.2 4.4 L9 23.5" stroke="#2a2a2a" stroke-width="1.3"/><circle cx="8.8" cy="26.3" r="2.7" fill="#eef3f8" stroke="#5a7fa8" stroke-width="1.7"/><circle cx="18.4" cy="26.3" r="2.7" fill="#eef3f8" stroke="#5a7fa8" stroke-width="1.7"/></svg>
<svg class="a" style="left:98px;top:152px;" width="32" height="32" viewBox="0 0 32 32"><path d="M12 8 L12 3.5 Q12 3.5 11 3.5 L3.3 3.5 L3.3 25 L12.4 25" fill="none" stroke="#222" stroke-width="1.7" stroke-linejoin="round"/><path d="M12.4 8.3 L20.8 8.3 L28 13.9 L28 28.3 L12.4 28.3 Z" fill="#fafafa" stroke="#222" stroke-width="1.9" stroke-linejoin="round"/><path d="M20.8 8.3 L20.8 13.9 L28 13.9" fill="none" stroke="#222" stroke-width="1.5"/><path d="M17.2 19.9 H23.6 M17.2 23.1 H23.6" stroke="#444" stroke-width="1.3"/></svg>
<svg class="a" style="left:134.63px;top:164px;" width="12.739999999999998" height="8.675" viewBox="0 0 12.739999999999998 8.675"><path d="M2 2 L6.37 6.67 L10.74 2" fill="none" stroke="#222" stroke-width="2.4" stroke-linecap="round" stroke-linejoin="round"/></svg>
<svg class="a" style="left:98px;top:188px;" width="34" height="30" viewBox="0 0 34 30"><path d="M26.4 4.3 L29.6 7.5 L21.5 15.6 L23.3 17.4 L19.5 21.2 L12.3 14 L16.1 10.2 L17.9 12 Z" fill="#fafafa" stroke="#222" stroke-width="1.9" stroke-linejoin="round"/><path d="M13.5 13.8 Q8 13.5 3.7 14.5 Q8 20 14.4 25 Q16.5 21.5 19.6 21.5 Z" fill="#efe3c0" stroke="#e4a090" stroke-width="1.3" stroke-linejoin="round"/></svg>
<div class="a" style="left:167px;top:123px;width:1.5px;height:98px;background:#d0d0d0;"></div>
<div class="a" style="left:184.7px;top:123.3px;width:224.3px;height:37.5px;background:#fdfdfd;border:1.2px solid #d4d4d4;border-radius:7px"></div>
<div class="t" style="left:194.50px;top:131.00px;font-size:19px;line-height:21.22px;color:#111;transform:scaleX(1.0493);">Aptos Narrow (Tek...</div>
<svg class="a" style="left:391.225px;top:137px;" width="12.549999999999999" height="9.1" viewBox="0 0 12.549999999999999 9.1"><path d="M2 2 L6.27 7.10 L10.55 2" fill="none" stroke="#222" stroke-width="2.3" stroke-linecap="round" stroke-linejoin="round"/></svg>
<div class="a" style="left:413.2px;top:123.3px;width:85px;height:37.5px;background:#fdfdfd;border:1.2px solid #d4d4d4;border-radius:7px"></div>
<div class="t" style="left:422.50px;top:131.00px;font-size:19px;line-height:21.22px;color:#111;transform:scaleX(0.9179);">10</div>
<svg class="a" style="left:480.83750000000003px;top:137px;" width="13.025" height="9.1" viewBox="0 0 13.025 9.1"><path d="M2 2 L6.51 7.10 L11.03 2" fill="none" stroke="#222" stroke-width="2.3" stroke-linecap="round" stroke-linejoin="round"/></svg>
<div class="t" style="left:511.00px;top:128.00px;font-size:24px;line-height:26.81px;color:#333;transform:scaleX(1.0619);">A</div>
<svg class="a" style="left:526px;top:129px;" width="10" height="8" viewBox="0 0 10 8"><path d="M1.5 6.5 L5 2.5 L8.5 6.5" fill="none" stroke="#7d93b8" stroke-width="1.5"/></svg>
<div class="t" style="left:554.50px;top:131.00px;font-size:21px;line-height:23.46px;color:#333;transform:scaleX(1.0351);">A</div>
<svg class="a" style="left:567.5px;top:129px;" width="10" height="8" viewBox="0 0 10 8"><path d="M1.5 1.5 L5 5.5 L8.5 1.5" fill="none" stroke="#7d93b8" stroke-width="1.5"/></svg>
<div class="a" style="left:184.7px;top:173.6px;width:37.5px;height:39px;background:#c6c6c6;border-radius:6px"></div>
<div class="t" style="left:198.00px;top:181.00px;font-size:21px;line-height:23.46px;color:#222;font-weight:bold;transform:scaleX(0.8572);">B</div>
<div class="t" style="left:239.00px;top:181.00px;font-size:22px;line-height:24.57px;color:#333;font-style:italic;font-family:'Liberation Serif',serif;">I</div>
<div class="t" style="left:279.50px;top:181.00px;font-size:20px;line-height:22.34px;color:#333;transform:scaleX(0.9000);">U</div>
<div class="a" style="left:279.5px;top:202px;width:13px;height:1.6px;background:#333;"></div>
<svg class="a" style="left:308.235px;top:188px;" width="12.93" height="9.1" viewBox="0 0 12.93 9.1"><path d="M2 2 L6.46 7.10 L10.93 2" fill="none" stroke="#222" stroke-width="2.3" stroke-linecap="round" stroke-linejoin="round"/></svg>
<div class="a" style="left:338.5px;top:179.5px;width:1.5px;height:27.80000000000001px;background:#d0d0d0;"></div>
<svg class="a" style="left:356px;top:179px;" width="29" height="28" viewBox="0 0 29 28"><rect x="2" y="2" width="24" height="24" fill="none" stroke="#111" stroke-width="2"/><path d="M14 2 V26 M2 14 H26" stroke="#111" stroke-width="2"/></svg>
<svg class="a" style="left:393.2375px;top:188px;" width="13.025" height="9.1" viewBox="0 0 13.025 9.1"><path d="M2 2 L6.51 7.10 L11.03 2" fill="none" stroke="#222" stroke-width="2.3" stroke-linecap="round" stroke-linejoin="round"/></svg>
<div class="a" style="left:423.6px;top:179.5px;width:1.5px;height:27.80000000000001px;background:#d0d0d0;"></div>
<svg class="a" style="left:442px;top:178px;" width="30" height="30" viewBox="0 0 30 30"><path d="M6 12 L14 4 L22 12 L15 19 Q13 21 11 19 L6 14 Z" fill="none" stroke="#222" stroke-width="1.6" stroke-linejoin="round"/><path d="M22 12 Q25 16 23 18" fill="none" stroke="#222" stroke-width="1.6"/><path d="M11 6 L9 2" stroke="#222" stroke-width="1.6"/><rect x="2" y="23" width="26" height="5" fill="#f5e61c"/></svg>
<svg class="a" style="left:478.24px;top:188px;" width="13.12" height="9.1" viewBox="0 0 13.12 9.1"><path d="M2 2 L6.56 7.10 L11.12 2" fill="none" stroke="#222" stroke-width="2.3" stroke-linecap="round" stroke-linejoin="round"/></svg>
<div class="t" style="left:510.00px;top:177.00px;font-size:23.5px;line-height:26.25px;color:#222;">A</div>
<div class="a" style="left:504px;top:200.3px;width:25.5px;height:5.3px;background:#d0312d;"></div>
<svg class="a" style="left:539.225px;top:188px;" width="12.549999999999999" height="9.1" viewBox="0 0 12.549999999999999 9.1"><path d="M2 2 L6.27 7.10 L10.55 2" fill="none" stroke="#222" stroke-width="2.3" stroke-linecap="round" stroke-linejoin="round"/></svg>
<div class="a" style="left:599.7px;top:123px;width:1.5px;height:98px;background:#d0d0d0;"></div>
<div class="a" style="left:622.40px;top:120px;width:22.60px;height:2px;background:#333;"></div>
<div class="a" style="left:626.00px;top:126px;width:15.60px;height:2px;background:#333;"></div>
<div class="a" style="left:622.40px;top:133px;width:22.60px;height:2px;background:#333;"></div>
<div class="a" style="left:654.5px;top:117.4px;width:34.7px;height:31.2px;background:#c8c8c8;border-radius:5px"></div>
<div class="a" style="left:661.00px;top:125px;width:22.00px;height:2px;background:#333;"></div>
<div class="a" style="left:664.00px;top:131px;width:16.00px;height:2px;background:#333;"></div>
<div class="a" style="left:661.00px;top:137px;width:22.00px;height:2px;background:#333;"></div>
<div class="a" style="left:699.00px;top:131px;width:22.70px;height:2px;background:#333;"></div>
<div class="a" style="left:702.50px;top:137px;width:15.50px;height:2px;background:#333;"></div>
<div class="a" style="left:699.00px;top:144px;width:22.70px;height:2px;background:#333;"></div>
<div class="t" style="left:738.00px;top:118.00px;font-size:15px;line-height:16.75px;color:#333;transform:scaleX(1.0788);">ab</div>
<div class="t" style="left:738.00px;top:132.00px;font-size:15px;line-height:16.75px;color:#333;transform:scaleX(1.0667);">c</div>
<svg class="a" style="left:746px;top:134px;" width="20" height="14" viewBox="0 0 20 14"><path d="M3 9 L10 9 Q15 9 15 5 Q15 1 10 1" fill="none" stroke="#4a78b8" stroke-width="1.6"/><path d="M6 6 L3 9 L6 12" fill="none" stroke="#4a78b8" stroke-width="1.6"/></svg>
<svg class="a" style="left:769.725px;top:128px;" width="12.549999999999999" height="8.59" viewBox="0 0 12.549999999999999 8.59"><path d="M2 2 L6.27 6.59 L10.55 2" fill="none" stroke="#222" stroke-width="2.3" stroke-linecap="round" stroke-linejoin="round"/></svg>
<div class="a" style="left:622.40px;top:157px;width:22.30px;height:2px;background:#333;"></div>
<div class="a" style="left:661.20px;top:157px;width:21.70px;height:2px;background:#333;"></div>
<div class="a" style="left:699.40px;top:157px;width:22.10px;height:2px;background:#333;"></div>
<div class="a" style="left:622.40px;top:163px;width:15.80px;height:2px;background:#333;"></div>
<div class="a" style="left:664.20px;top:163px;width:15.70px;height:2px;background:#333;"></div>
<div class="a" style="left:706.00px;top:163px;width:15.50px;height:2px;background:#333;"></div>
<div class="a" style="left:622.40px;top:169px;width:22.30px;height:2px;background:#333;"></div>
<div class="a" style="left:661.20px;top:169px;width:21.70px;height:2px;background:#333;"></div>
<div class="a" style="left:699.40px;top:169px;width:22.10px;height:2px;background:#333;"></div>
<div class="a" style="left:622.40px;top:176px;width:15.80px;height:2px;background:#333;"></div>
<div class="a" style="left:664.20px;top:176px;width:15.70px;height:2px;background:#333;"></div>
<div class="a" style="left:706.00px;top:176px;width:15.50px;height:2px;background:#333;"></div>
<svg class="a" style="left:735px;top:153px;" width="28" height="27" viewBox="0 0 28 27"><rect x="1.8" y="1.8" width="24.4" height="23.4" fill="#fafafa" stroke="#2a2a2a" stroke-width="1.7"/><rect x="1.8" y="7.8" width="24.4" height="11.4" fill="#dbe8f6" stroke="#6a88b8" stroke-width="1.3"/><path d="M13.5 1.8 V7.8 M13.5 19.2 V25.2" stroke="#2a2a2a" stroke-width="1.4"/><path d="M5.5 13.5 H21.5 M8.5 10.5 L5.5 13.5 L8.5 16.5 M18.5 10.5 L21.5 13.5 L18.5 16.5" fill="none" stroke="#6a88b8" stroke-width="1.8" stroke-linejoin="round"/></svg>
<svg class="a" style="left:769.725px;top:164px;" width="12.549999999999999" height="8.59" viewBox="0 0 12.549999999999999 8.59"><path d="M2 2 L6.27 6.59 L10.55 2" fill="none" stroke="#222" stroke-width="2.3" stroke-linecap="round" stroke-linejoin="round"/></svg>
<div class="a" style="left:622.40px;top:192px;width:22.30px;height:2px;background:#333;"></div>
<div class="a" style="left:635.60px;top:198px;width:9.10px;height:2px;background:#333;"></div>
<div class="a" style="left:635.60px;top:204px;width:9.10px;height:2px;background:#333;"></div>
<div class="a" style="left:622.40px;top:211px;width:22.30px;height:2px;background:#333;"></div>
<svg class="a" style="left:621px;top:197px;" width="12" height="11" viewBox="0 0 12 11"><path d="M1.5 5.2 H10.5 M5 1.5 L1.5 5.2 L5 8.9" fill="none" stroke="#6a88b8" stroke-width="1.7" stroke-linejoin="round"/></svg>
<div class="a" style="left:661.20px;top:192px;width:21.70px;height:2px;background:#333;"></div>
<div class="a" style="left:673.80px;top:198px;width:9.10px;height:2px;background:#333;"></div>
<div class="a" style="left:673.80px;top:204px;width:9.10px;height:2px;background:#333;"></div>
<div class="a" style="left:661.20px;top:211px;width:21.70px;height:2px;background:#333;"></div>
<svg class="a" style="left:660px;top:197px;" width="12" height="11" viewBox="0 0 12 11"><path d="M1 5.2 H10 M6.5 1.5 L10 5.2 L6.5 8.9" fill="none" stroke="#6a88b8" stroke-width="1.7" stroke-linejoin="round"/></svg>
<div class="a" style="left:703px;top:189px;width:1.5px;height:26px;background:#d0d0d0;"></div>
<svg class="a" style="left:720px;top:188px;" width="30" height="27" viewBox="0 0 30 27"><text x="3" y="15" font-size="14" font-family="Liberation Sans" fill="#333" transform="rotate(-35 10 12)">ab</text><path d="M10 25 L26 6 M20 6 L26 6 L26 12" fill="none" stroke="#4a78b8" stroke-width="1.6"/></svg>
<svg class="a" style="left:755.2425000000001px;top:198.7px;" width="13.214999999999998" height="8.504999999999999" viewBox="0 0 13.214999999999998 8.504999999999999"><path d="M2 2 L6.61 6.50 L11.21 2" fill="none" stroke="#222" stroke-width="2.3" stroke-linecap="round" stroke-linejoin="round"/></svg>
<div class="a" style="left:800px;top:123px;width:1.5px;height:98px;background:#d0d0d0;"></div>
<div class="a" style="left:819.8px;top:123.3px;width:246.5px;height:37.5px;background:#fdfdfd;border:1.2px solid #d4d4d4;border-radius:7px"></div>
<div class="t" style="left:829.50px;top:130.00px;font-size:19px;line-height:21.22px;color:#111;transform:scaleX(1.0315);">Ogólne</div>
<svg class="a" style="left:1048.25px;top:137px;" width="13.5" height="9.1" viewBox="0 0 13.5 9.1"><path d="M2 2 L6.75 7.10 L11.50 2" fill="none" stroke="#222" stroke-width="2.3" stroke-linecap="round" stroke-linejoin="round"/></svg>
<svg class="a" style="left:824px;top:184px;" width="30" height="24" viewBox="0 0 30 24"><rect x="1" y="3" width="22" height="15" fill="none" stroke="#333" stroke-width="1.6"/><text x="4" y="15" font-size="10" font-family="Liberation Sans" fill="#333">CC</text><ellipse cx="22" cy="13" rx="5" ry="2" fill="#f7e0d0" stroke="#d07a5a" stroke-width="1.3"/><path d="M17 13 V20 Q22 23 27 20 V13" fill="#f7e0d0" stroke="#d07a5a" stroke-width="1.3"/></svg>
<svg class="a" style="left:860.7375px;top:188px;" width="13.025" height="8.675" viewBox="0 0 13.025 8.675"><path d="M2 2 L6.51 6.67 L11.03 2" fill="none" stroke="#222" stroke-width="2.3" stroke-linecap="round" stroke-linejoin="round"/></svg>
<div class="t" style="left:887.00px;top:180.00px;font-size:26px;line-height:29.04px;color:#333;transform:scaleX(1.0382);">%</div>
<svg class="a" style="left:933px;top:185px;" width="16" height="20" viewBox="0 0 16 20"><circle cx="7" cy="6" r="5" fill="#222"/><path d="M11 6 Q12 14 4 19" fill="none" stroke="#222" stroke-width="3" stroke-linecap="round"/></svg>
<div class="a" style="left:973.6px;top:179.5px;width:1.5px;height:27.5px;background:#d0d0d0;"></div>
<div class="t" style="left:1004.00px;top:180.00px;font-size:14px;line-height:15.64px;color:#333;transform:scaleX(1.0274);">0</div>
<div class="t" style="left:1002.00px;top:192.00px;font-size:14px;line-height:15.64px;color:#333;transform:scaleX(0.8221);">,00</div>
<svg class="a" style="left:992px;top:183px;" width="14" height="10" viewBox="0 0 14 10"><path d="M1 5 H13 M5 1 L1 5 L5 9" fill="none" stroke="#4a78b8" stroke-width="1.5"/></svg>
<div class="t" style="left:1043.00px;top:180.00px;font-size:14px;line-height:15.64px;color:#333;transform:scaleX(0.8221);">,00</div>
<div class="t" style="left:1050.00px;top:192.00px;font-size:14px;line-height:15.64px;color:#333;transform:scaleX(0.8565);">,0</div>
<svg class="a" style="left:1034px;top:195px;" width="16" height="10" viewBox="0 0 16 10"><path d="M1 5 H13 M9 1 L13 5 L9 9" fill="none" stroke="#4a78b8" stroke-width="1.5"/></svg>
<div class="a" style="left:1084px;top:123px;width:1.5px;height:98px;background:#d0d0d0;"></div>
<svg class="a" style="left:1104px;top:119px;" width="29" height="27" viewBox="0 0 29 27"><rect x="1.5" y="1.5" width="25" height="23" fill="#fff" stroke="#333" stroke-width="1.5"/><path d="M1.5 9 H26.5 M1.5 16.5 H26.5 M9 1.5 V24.5 M17.5 1.5 V24.5" stroke="#333" stroke-width="1.2"/><rect x="2.5" y="2.5" width="6" height="6" fill="#e04040"/><rect x="9.5" y="17" width="16" height="7" fill="#e04040"/><rect x="2.5" y="10" width="6" height="6" fill="#4a78b8"/></svg>
<div class="t" style="left:1141.50px;top:125.00px;font-size:16.8px;line-height:18.77px;color:#1a1a1a;transform:scaleX(1.0536);-webkit-text-stroke:0.35px #1a1a1a;">Formatowanie warunkowe</div>
<svg class="a" style="left:1357.225px;top:128px;" width="12.549999999999999" height="9.1" viewBox="0 0 12.549999999999999 9.1"><path d="M2 2 L6.27 7.10 L10.55 2" fill="none" stroke="#222" stroke-width="2.3" stroke-linecap="round" stroke-linejoin="round"/></svg>
<svg class="a" style="left:1104px;top:155px;" width="29" height="27" viewBox="0 0 29 27"><rect x="1.5" y="1.5" width="25" height="23" fill="#fff" stroke="#333" stroke-width="1.5"/><path d="M1.5 8 H26.5 M9 1.5 V24.5 M17.5 1.5 V12" stroke="#333" stroke-width="1.2"/><rect x="2" y="2" width="24" height="6" fill="#aac4e4"/><path d="M13 24 L25 10 L28 13 L16 26 Z" fill="#aac4e4" stroke="#333" stroke-width="1.3"/></svg>
<div class="t" style="left:1141.50px;top:160.00px;font-size:16.8px;line-height:18.77px;color:#1a1a1a;transform:scaleX(1.0656);-webkit-text-stroke:0.35px #1a1a1a;">Formatuj jako tabelę</div>
<svg class="a" style="left:1313.225px;top:164px;" width="12.549999999999999" height="9.1" viewBox="0 0 12.549999999999999 9.1"><path d="M2 2 L6.27 7.10 L10.55 2" fill="none" stroke="#222" stroke-width="2.3" stroke-linecap="round" stroke-linejoin="round"/></svg>
<svg class="a" style="left:1104px;top:190px;" width="29" height="27" viewBox="0 0 29 27"><rect x="1.5" y="1.5" width="25" height="23" fill="#fff" stroke="#333" stroke-width="1.5"/><path d="M1.5 8 H26.5 M9 1.5 V24.5" stroke="#333" stroke-width="1.2"/><path d="M4 10 H20 V20 L10 24 H4 Z" fill="#aac4e4"/><path d="M13 24 L25 10 L28 13 L16 26 Z" fill="#fff" stroke="#333" stroke-width="1.3"/></svg>
<div class="t" style="left:1141.50px;top:194.00px;font-size:16.8px;line-height:18.77px;color:#1a1a1a;transform:scaleX(1.0741);-webkit-text-stroke:0.35px #1a1a1a;">Style komórki</div>
<svg class="a" style="left:1259.225px;top:199px;" width="12.549999999999999" height="9.1" viewBox="0 0 12.549999999999999 9.1"><path d="M2 2 L6.27 7.10 L10.55 2" fill="none" stroke="#222" stroke-width="2.3" stroke-linecap="round" stroke-linejoin="round"/></svg>
<div class="a" style="left:1389.6px;top:123px;width:1.5px;height:98px;background:#d0d0d0;"></div>
<svg class="a" style="left:1410px;top:119px;" width="29" height="27" viewBox="0 0 29 27"><rect x="1.5" y="1.5" width="25" height="23" fill="#fff" stroke="#333" stroke-width="1.5"/><path d="M1.5 9 H26.5 M1.5 17 H26.5 M13 1.5 V24.5" stroke="#333" stroke-width="1.2"/><rect x="13" y="9" width="13" height="8" fill="#aac4e4"/><path d="M4 13 H12 M7 10 L4 13 L7 16" fill="none" stroke="#4a78b8" stroke-width="1.5"/></svg>
<div class="t" style="left:1446.50px;top:125.00px;font-size:16.8px;line-height:18.77px;color:#1a1a1a;transform:scaleX(1.0218);-webkit-text-stroke:0.35px #1a1a1a;">Wstaw</div>
<svg class="a" style="left:1508.225px;top:128px;" width="12.549999999999999" height="9.1" viewBox="0 0 12.549999999999999 9.1"><path d="M2 2 L6.27 7.10 L10.55 2" fill="none" stroke="#222" stroke-width="2.3" stroke-linecap="round" stroke-linejoin="round"/></svg>
<svg class="a" style="left:1410px;top:155px;" width="29" height="27" viewBox="0 0 29 27"><path d="M1.5 1.5 H26 M1.5 24.5 H26 M1.5 1.5 V24.5 M1.5 9 H12 M1.5 17 H12" fill="none" stroke="#333" stroke-width="1.3"/><rect x="4" y="9" width="10" height="8" fill="#aac4e4" stroke="#333" stroke-width="1.2"/><path d="M17 8 L25 18 M25 8 L17 18" stroke="#e04040" stroke-width="1.8"/></svg>
<div class="t" style="left:1446.50px;top:160.00px;font-size:16.8px;line-height:18.77px;color:#1a1a1a;transform:scaleX(1.0275);-webkit-text-stroke:0.35px #1a1a1a;">Usuń</div>
<svg class="a" style="left:1496.225px;top:164px;" width="12.549999999999999" height="9.1" viewBox="0 0 12.549999999999999 9.1"><path d="M2 2 L6.27 7.10 L10.55 2" fill="none" stroke="#222" stroke-width="2.3" stroke-linecap="round" stroke-linejoin="round"/></svg>
<svg class="a" style="left:1410px;top:190px;" width="29" height="27" viewBox="0 0 29 27"><rect x="1.5" y="4" width="25" height="21" fill="#fff" stroke="#333" stroke-width="1.5"/><path d="M1.5 11 H26.5 M1.5 18 H26.5 M9 4 V25 M19 4 V25" stroke="#333" stroke-width="1.2"/><rect x="9" y="11" width="10" height="7" fill="#aac4e4"/><path d="M9 1 H19" stroke="#4a78b8" stroke-width="1.3"/></svg>
<div class="t" style="left:1446.50px;top:195.00px;font-size:16.8px;line-height:18.77px;color:#1a1a1a;transform:scaleX(1.0636);-webkit-text-stroke:0.35px #1a1a1a;">Formatuj</div>
<svg class="a" style="left:1527.225px;top:199px;" width="12.549999999999999" height="9.1" viewBox="0 0 12.549999999999999 9.1"><path d="M2 2 L6.27 7.10 L10.55 2" fill="none" stroke="#222" stroke-width="2.3" stroke-linecap="round" stroke-linejoin="round"/></svg>
<div class="a" style="left:1558.7px;top:123px;width:1.5px;height:98px;background:#d0d0d0;"></div>
<svg class="a" style="left:1581px;top:119px;" width="25" height="27" viewBox="0 0 25 27"><path d="M22 3 L2 3 L12 13 L2 23 L22 23" fill="none" stroke="#222" stroke-width="1.8" stroke-linejoin="miter"/></svg>
<svg class="a" style="left:1613.65px;top:129px;" width="13.5" height="8.675" viewBox="0 0 13.5 8.675"><path d="M2 2 L6.75 6.67 L11.50 2" fill="none" stroke="#222" stroke-width="2.3" stroke-linecap="round" stroke-linejoin="round"/></svg>
<svg class="a" style="left:1580px;top:155px;" width="27" height="25" viewBox="0 0 27 25"><rect x="1.5" y="1.5" width="24" height="22" fill="none" stroke="#333" stroke-width="1.5"/><path d="M1.5 7 H25.5" stroke="#333" stroke-width="1.3"/><path d="M13 10 V20 M9 16 L13 20 L17 16" fill="none" stroke="#4a78b8" stroke-width="1.6"/></svg>
<svg class="a" style="left:1613.65px;top:164px;" width="13.5" height="8.675" viewBox="0 0 13.5 8.675"><path d="M2 2 L6.75 6.67 L11.50 2" fill="none" stroke="#222" stroke-width="2.3" stroke-linecap="round" stroke-linejoin="round"/></svg>
<svg class="a" style="left:1580px;top:189px;" width="27" height="27" viewBox="0 0 27 27"><path d="M2 15 L13 4 L24 13 L13 24 Z" fill="#fff" stroke="#a04a5a" stroke-width="1.6" stroke-linejoin="round"/><path d="M7.5 9.5 L18.5 18.5 L13 24 L2 15 Z" fill="#8a9ed0" stroke="#6a70a8" stroke-width="1.4"/></svg>
<svg class="a" style="left:1613.65px;top:199px;" width="13.5" height="8.675" viewBox="0 0 13.5 8.675"><path d="M2 2 L6.75 6.67 L11.50 2" fill="none" stroke="#222" stroke-width="2.3" stroke-linecap="round" stroke-linejoin="round"/></svg>
<div class="t" style="left:1640.00px;top:126.00px;font-size:20px;line-height:22.34px;color:#4a78b8;transform:scaleX(1.1993);">A</div>
<div class="t" style="left:1640.00px;top:147.00px;font-size:20px;line-height:22.34px;color:#333;transform:scaleX(1.2278);">Z</div>
<svg class="a" style="left:1657px;top:133px;" width="30" height="28" viewBox="0 0 30 28"><path d="M1 1 H27 L17 13 V26 L11 26 V13 Z" fill="none" stroke="#222" stroke-width="1.8" stroke-linejoin="round"/></svg>
<svg class="a" style="left:1694.2350000000001px;top:141px;" width="12.93" height="9.1" viewBox="0 0 12.93 9.1"><path d="M2 2 L6.46 7.10 L10.93 2" fill="none" stroke="#222" stroke-width="2.3" stroke-linecap="round" stroke-linejoin="round"/></svg>
<div class="t" style="left:1648.00px;top:179.00px;font-size:16.8px;line-height:18.77px;color:#1a1a1a;transform:scaleX(1.0846);-webkit-text-stroke:0.35px #1a1a1a;">Sortuj</div>
<div class="t" style="left:1647.00px;top:198.00px;font-size:16.8px;line-height:18.77px;color:#1a1a1a;transform:scaleX(1.1511);-webkit-text-stroke:0.35px #1a1a1a;">i filtruj</div>
<svg class="a" style="left:1716px;top:122px;" width="52" height="50" viewBox="0 0 52 50"><circle cx="32" cy="19" r="16.5" fill="none" stroke="#222" stroke-width="1.8"/><path d="M20 30 L3 47" stroke="#222" stroke-width="1.8" stroke-linecap="round"/></svg>
<svg class="a" style="left:1774.24px;top:141px;" width="13.12" height="9.1" viewBox="0 0 13.12 9.1"><path d="M2 2 L6.56 7.10 L11.12 2" fill="none" stroke="#222" stroke-width="2.3" stroke-linecap="round" stroke-linejoin="round"/></svg>
<div class="t" style="left:1719.00px;top:179.00px;font-size:16.8px;line-height:18.77px;color:#1a1a1a;transform:scaleX(1.0795);-webkit-text-stroke:0.35px #1a1a1a;">Znajdź i</div>
<div class="t" style="left:1719.00px;top:198.00px;font-size:16.8px;line-height:18.77px;color:#1a1a1a;transform:scaleX(1.0466);-webkit-text-stroke:0.35px #1a1a1a;">zaznacz</div>
<div class="a" style="left:1807px;top:123.7px;width:1.5px;height:98.10000000000001px;background:#d0d0d0;"></div>
<svg class="a" style="left:1834px;top:118px;" width="50" height="52" viewBox="0 0 50 52"><path d="M3.4 5.8 L16 5.8 M3.4 5.8 L3.4 49.6 L36 49.6 L36 30" fill="none" stroke="#c8ccd4" stroke-width="1.6"/><path d="M18 14 L24 8 L34 18 L28 24 Z M26 6 L31 1.5 L41 11.5 L36 16 Z" fill="none" stroke="#c4c4c4" stroke-width="1.6" stroke-linejoin="round"/><path d="M6.5 28 L18.5 16 L27 24.5 L15 36.5 Z M10.5 28.5 L18.5 20.5 M13.5 31.5 L21.5 23.5" fill="none" stroke="#c4c4c4" stroke-width="1.6" stroke-linejoin="round"/></svg>
<svg class="a" style="left:1886.92px;top:141px;" width="12.36" height="9.1" viewBox="0 0 12.36 9.1"><path d="M2 2 L6.18 7.10 L10.36 2" fill="none" stroke="#c0c0c0" stroke-width="1.6" stroke-linecap="round" stroke-linejoin="round"/></svg>
<div class="t" style="left:1827.50px;top:180.00px;font-size:16.8px;line-height:18.77px;color:#9c9c9c;transform:scaleX(1.0607);-webkit-text-stroke:0.15px #9c9c9c;">Poufność</div>
<div class="a" style="left:1924px;top:123.7px;width:1.5px;height:98.10000000000001px;background:#d0d0d0;"></div>
<svg class="a" style="left:1950px;top:122px;" width="48" height="48" viewBox="0 0 48 48"><rect x="1.2" y="1.2" width="45" height="45" fill="none" stroke="#9a5a48" stroke-width="1.4"/><rect x="5" y="5" width="17" height="17" fill="none" stroke="#6b5b57" stroke-width="1.6"/><rect x="25.5" y="5" width="17" height="17" fill="none" stroke="#6b5b57" stroke-width="1.6"/><rect x="5" y="25" width="17" height="17" fill="none" stroke="#6b5b57" stroke-width="1.6"/><rect x="25.5" y="25" width="17" height="17" fill="none" stroke="#6b5b57" stroke-width="1.6"/></svg>
<div class="t" style="left:1943.50px;top:180.00px;font-size:16.8px;line-height:18.77px;color:#1a1a1a;transform:scaleX(1.0638);-webkit-text-stroke:0.35px #1a1a1a;">Dodatki</div>
<div class="a" style="left:2026.8px;top:123.7px;width:1.5px;height:98.10000000000001px;background:#d0d0d0;"></div>
<svg class="a" style="left:2080px;top:121px;" width="50" height="50" viewBox="0 0 50 50"><path d="M25 1 L49 25 L25 49 L1 25 Z" fill="#5b7db8"/><path d="M13.5 18 H36.5 M20.5 17.5 Q20.5 13.5 25 13.5 Q29.5 13.5 29.5 17.5" fill="none" stroke="#fff" stroke-width="2.2" stroke-linecap="round"/><path d="M16.5 19 L17.5 34.5 Q17.6 36 19 36 L31 36 Q32.4 36 32.5 34.5 L33.5 19" fill="none" stroke="#fff" stroke-width="2.2" stroke-linejoin="round"/><path d="M22.5 24 V30.5 M27.5 24 V30.5" stroke="#fff" stroke-width="2"/></svg>
<div class="t" style="left:2045.50px;top:180.00px;font-size:16.8px;line-height:18.77px;color:#1a1a1a;transform:scaleX(1.0094);-webkit-text-stroke:0.35px #1a1a1a;">CARBOOwaste</div>
<div class="t" style="left:2086.50px;top:198.00px;font-size:16.8px;line-height:18.77px;color:#1a1a1a;transform:scaleX(0.9888);-webkit-text-stroke:0.35px #1a1a1a;">BDO</div>
<div class="a" style="left:0px;top:227px;width:2304px;height:2px;background:#c8c8c8;"></div>
<div class="a" style="left:0px;top:229px;width:2304px;height:42px;background:#f9f9f9;"></div>
<div class="a" style="left:0px;top:229px;width:136px;height:41px;background:#fcfcfc;border:2px solid #d2d2d2"></div>
<div class="t" style="left:16.00px;top:238.00px;font-size:20px;line-height:22.34px;color:#111;transform:scaleX(0.8911);-webkit-text-stroke:0.3px #111;">A1</div>
<svg class="a" style="left:121px;top:235px;" width="13" height="28" viewBox="0 0 13 28"><path d="M1 8 L6 1 L11 8 Z" fill="#555"/><path d="M1 19 L6 26 L11 19 Z" fill="#555"/></svg>
<svg class="a" style="left:158px;top:242px;" width="22" height="20" viewBox="0 0 22 20"><path d="M3 2 L18 17 M18 2 L3 17" stroke="#bdbdbd" stroke-width="2.8" stroke-linecap="round"/></svg>
<svg class="a" style="left:203px;top:242px;" width="26" height="20" viewBox="0 0 26 20"><path d="M2 10 L9 17 L24 2" fill="none" stroke="#bdbdbd" stroke-width="2.8" stroke-linecap="round"/></svg>
<div class="t" style="left:243.00px;top:236.00px;font-size:25px;line-height:27.93px;color:#333;font-style:italic;font-family:'Liberation Serif',serif;">fx</div>
<svg class="a" style="left:271.85px;top:247px;" width="13.5" height="8.675" viewBox="0 0 13.5 8.675"><path d="M2 2 L6.75 6.67 L11.50 2" fill="none" stroke="#b8b8b8" stroke-width="1.5" stroke-linecap="round" stroke-linejoin="round"/></svg>
<div class="a" style="left:288.9px;top:238px;width:1.5px;height:25.6px;background:#d8d8d8;"></div>
<div class="a" style="left:291px;top:233px;width:1973px;height:36px;background:#f8f8f8;border-top:1.5px solid #e6e6e6;border-left:1.5px solid #e6e6e6"></div>
<div class="t" style="left:301.50px;top:238.00px;font-size:21px;line-height:23.46px;color:#111;transform:scaleX(0.8332);-webkit-text-stroke:0.35px #111;">RAPORT</div>
<div class="a" style="left:2265px;top:234.5px;width:39px;height:31.5px;background:#fafafa;border:1.2px solid #d0d0d0;border-radius:3px"></div>
<svg class="a" style="left:2277px;top:244px;" width="14" height="11" viewBox="0 0 14 11"><path d="M1 1 L13 1 L7 10 Z" fill="#444"/></svg>
<div class="a" style="left:0px;top:270px;width:2304px;height:1.5px;background:#c4c4c4;"></div>
<div class="a" style="left:0px;top:273px;width:2304px;height:1.5px;background:#c4c4c4;"></div>
<div class="a" style="left:0px;top:1362px;width:2304px;height:42px;background:#efefef;"></div>
<div class="a" style="left:0px;top:1362px;width:2304px;height:1.5px;background:#cfcfcf;"></div>
<svg class="a" style="left:22px;top:1373px;" width="16" height="19" viewBox="0 0 16 19"><path d="M14 1 L14 18 L2 9.5 Z" fill="#b0b0b0"/></svg>
<svg class="a" style="left:58px;top:1373px;" width="16" height="19" viewBox="0 0 16 19"><path d="M2 1 L2 18 L14 9.5 Z" fill="#333"/></svg>
<div class="a" style="left:96px;top:1364px;width:1.5px;height:31px;background:#c8c8c8;"></div>
<div class="a" style="left:103px;top:1363.6px;width:328px;height:34.4px;background:#dde6f1;"></div>
<div class="t" style="left:132.00px;top:1372.00px;font-size:18.6px;line-height:20.78px;color:#111;-webkit-text-stroke:0.55px #111;">0001</div>
<div class="t" style="left:180.00px;top:1372.00px;font-size:18.6px;line-height:20.78px;color:#111;transform:scaleX(1.0607);-webkit-text-stroke:0.6px #111;">Przegląd stat. KPO 07'25</div>
<div class="a" style="left:442px;top:1363.6px;width:328px;height:34.4px;background:#dde6f1;"></div>
<div class="t" style="left:471.00px;top:1372.00px;font-size:18.6px;line-height:20.78px;color:#111;-webkit-text-stroke:0.55px #111;">0001</div>
<div class="t" style="left:519.50px;top:1372.00px;font-size:18.6px;line-height:20.78px;color:#111;transform:scaleX(1.0597);-webkit-text-stroke:0.6px #111;">Potwierdzone KPO 07'25</div>
<div class="a" style="left:1058px;top:1363.6px;width:343px;height:34.4px;background:#dde6f1;"></div>
<div class="t" style="left:1087.00px;top:1372.00px;font-size:18.6px;line-height:20.78px;color:#111;-webkit-text-stroke:0.55px #111;">0001</div>
<div class="t" style="left:1135.50px;top:1372.00px;font-size:18.6px;line-height:20.78px;color:#111;transform:scaleX(1.0599);-webkit-text-stroke:0.6px #111;">Zestaw. odpad_mies. 2024</div>
<div class="a" style="left:1414.4px;top:1363.6px;width:324.5999999999999px;height:34.4px;background:#dde6f1;"></div>
<div class="t" style="left:1442.00px;top:1372.00px;font-size:18.6px;line-height:20.78px;color:#111;-webkit-text-stroke:0.55px #111;">0001</div>
<div class="t" style="left:1490.50px;top:1372.00px;font-size:18.6px;line-height:20.78px;color:#111;transform:scaleX(1.0572);-webkit-text-stroke:0.6px #111;">Zestawienie roczne 2024</div>
<div class="a" style="left:436px;top:1364px;width:1.5px;height:31px;background:#cdcdcd;"></div>
<div class="a" style="left:1054px;top:1364px;width:1.5px;height:31px;background:#cdcdcd;"></div>
<div class="a" style="left:1407.3px;top:1364px;width:1.5px;height:31px;background:#cdcdcd;"></div>
<div class="a" style="left:1744.8px;top:1364px;width:1.5px;height:31px;background:#cdcdcd;"></div>
<div class="a" style="left:2045.8px;top:1364px;width:1.5px;height:31px;background:#cdcdcd;"></div>
<div class="a" style="left:2194px;top:1364px;width:1.5px;height:31px;background:#cdcdcd;"></div>
<div class="a" style="left:2254.9px;top:1364px;width:1.5px;height:31px;background:#cdcdcd;"></div>
<div class="a" style="left:776px;top:1362px;width:275px;height:35.5px;background:#fbfbfb;border-radius:0 0 6px 6px;box-shadow:0 1.5px 1.5px rgba(0,0,0,.18)"></div>
<div class="t" style="left:808.00px;top:1372.00px;font-size:18.6px;line-height:20.78px;color:#2f7a45;transform:scaleX(1.0468);-webkit-text-stroke:0.5px #2f7a45;">0001 KEO Roczne 2024</div>
<div class="t" style="left:1778.00px;top:1372.00px;font-size:18.6px;line-height:20.78px;color:#111;transform:scaleX(1.0631);-webkit-text-stroke:0.5px #111;">SŁOWNIK-Kody Odpadów</div>
<div class="t" style="left:2079.50px;top:1372.00px;font-size:18.6px;line-height:20.78px;color:#111;transform:scaleX(1.0251);-webkit-text-stroke:0.5px #111;-webkit-mask-image:linear-gradient(90deg,#000 0,#000 75%,rgba(0,0,0,.25) 85%,rgba(0,0,0,.2) 100%);">SŁOWNIK-P</div>
<div class="a" style="left:2217px;top:1380.8px;width:17px;height:2.4px;background:#222;"></div>
<div class="a" style="left:2224.3px;top:1374px;width:2.4px;height:16px;background:#222;"></div>
<div class="a" style="left:0px;top:1403px;width:2304px;height:37px;background:#d9d9d9;"></div>
<div class="a" style="left:0px;top:1403px;width:2304px;height:2px;background:#b4b4b4;"></div>
<div class="t" style="left:39.00px;top:1412.00px;font-size:18.2px;line-height:20.33px;color:#5a5a5a;transform:scaleX(1.0697);-webkit-text-stroke:0.3px #5a5a5a;">Gotowy</div>
<svg class="a" style="left:136px;top:1406px;" width="28" height="30" viewBox="0 0 28 30"><g fill="none" stroke-linecap="round" stroke-linejoin="round"><circle cx="12" cy="6.5" r="3" stroke="#555" stroke-width="1.6"/><path d="M3.5 11 Q8 13.5 12 13 Q16.5 13.5 20.5 10.5 M12 13.5 L11 19 Q9 22 7 26.5 M11 19 L14.5 21.5" stroke="#555" stroke-width="4.6"/><path d="M3.5 11 Q8 13.5 12 13 Q16.5 13.5 20.5 10.5 M12 13.5 L11 19 Q9 22 7 26.5 M11 19 L14.5 21.5" stroke="#d9d9d9" stroke-width="1.6"/><path d="M15.5 20 L24 28 M24 20 L15.5 28" stroke="#555" stroke-width="1.5"/></g></svg>
<div class="t" style="left:167.50px;top:1412.00px;font-size:18.2px;line-height:20.33px;color:#5a5a5a;transform:scaleX(1.1217);-webkit-text-stroke:0.3px #5a5a5a;">Ułatwienia dostępu: zbadaj</div>
<svg class="a" style="left:1464px;top:1404px;" width="34" height="36" viewBox="0 0 34 36"><polygon points="20.80,6.00 30.33,11.50 30.33,22.50 20.80,28.00 11.27,22.50 11.27,11.50" fill="#5a5a5a"/><polygon points="12.00,16.50 17.89,19.90 17.89,26.70 12.00,30.10 6.11,26.70 6.11,19.90" fill="#5a5a5a" stroke="#d9d9d9" stroke-width="1.6"/></svg>
<div class="t" style="left:1500.50px;top:1412.00px;font-size:18.2px;line-height:20.33px;color:#5a5a5a;transform:scaleX(1.1068);-webkit-text-stroke:0.3px #5a5a5a;">Pomyślnie załadowano dodatki</div>
<div class="a" style="left:1793.5px;top:1405px;width:59px;height:35px;background:#c3c3c3;"></div>
<svg class="a" style="left:1811px;top:1410px;" width="24" height="24" viewBox="0 0 24 24"><rect x="1" y="1" width="22" height="22" fill="#fff" stroke="#666" stroke-width="1.2"/><path d="M8.3 1 V23 M15.6 1 V23 M1 8.3 H23 M1 15.6 H23" stroke="#666" stroke-width="1.6"/></svg>
<svg class="a" style="left:1868px;top:1410px;" width="26" height="24" viewBox="0 0 26 24"><rect x="2" y="2" width="22" height="20" fill="none" stroke="#555" stroke-width="1.6"/><rect x="6" y="6" width="14" height="12" fill="none" stroke="#555" stroke-width="1.3"/><path d="M9 9.5 H17 M9 12 H17 M9 14.5 H17" stroke="#555" stroke-width="1.2"/></svg>
<svg class="a" style="left:1924px;top:1410px;" width="27" height="24" viewBox="0 0 27 24"><rect x="2" y="2" width="22" height="20" fill="none" stroke="#555" stroke-width="1.6"/><path d="M2 13 H15 V2 M9 2 V13" fill="none" stroke="#555" stroke-width="1.6"/></svg>
<div class="a" style="left:1978.6px;top:1420.6px;width:13.2px;height:2.8px;background:#555;"></div>
<div class="a" style="left:2002.8px;top:1419px;width:160px;height:6.4px;background:#9a9a9a;border-radius:3.2px"></div>
<div class="a" style="left:2070px;top:1409px;width:26px;height:26px;border-radius:50%;background:#fcfcfc;box-shadow:0 0.5px 2px rgba(0,0,0,.35)"></div>
<div class="a" style="left:2174.6px;top:1420.6px;width:12.6px;height:2.8px;background:#555;"></div>
<div class="a" style="left:2179.5px;top:1415.7px;width:2.8px;height:12.6px;background:#555;"></div>
<div class="t" style="left:2215.00px;top:1412.00px;font-size:18.2px;line-height:20.33px;color:#5a5a5a;transform:scaleX(1.0591);-webkit-text-stroke:0.3px #5a5a5a;">100%</div>
<svg class="a" style="left:1125px;top:1376px;filter:drop-shadow(0 1px 1px rgba(0,0,0,.25));" width="34" height="44" viewBox="0 0 34 44"><path d="M10.6 10 L10.6 28.5 L15 24.5 L18.5 33.5 L21.5 32 L18 23.5 L23.5 23.5 Z" fill="#111" stroke="#fff" stroke-width="1.8" stroke-linejoin="round"/></svg>
</body></html>
